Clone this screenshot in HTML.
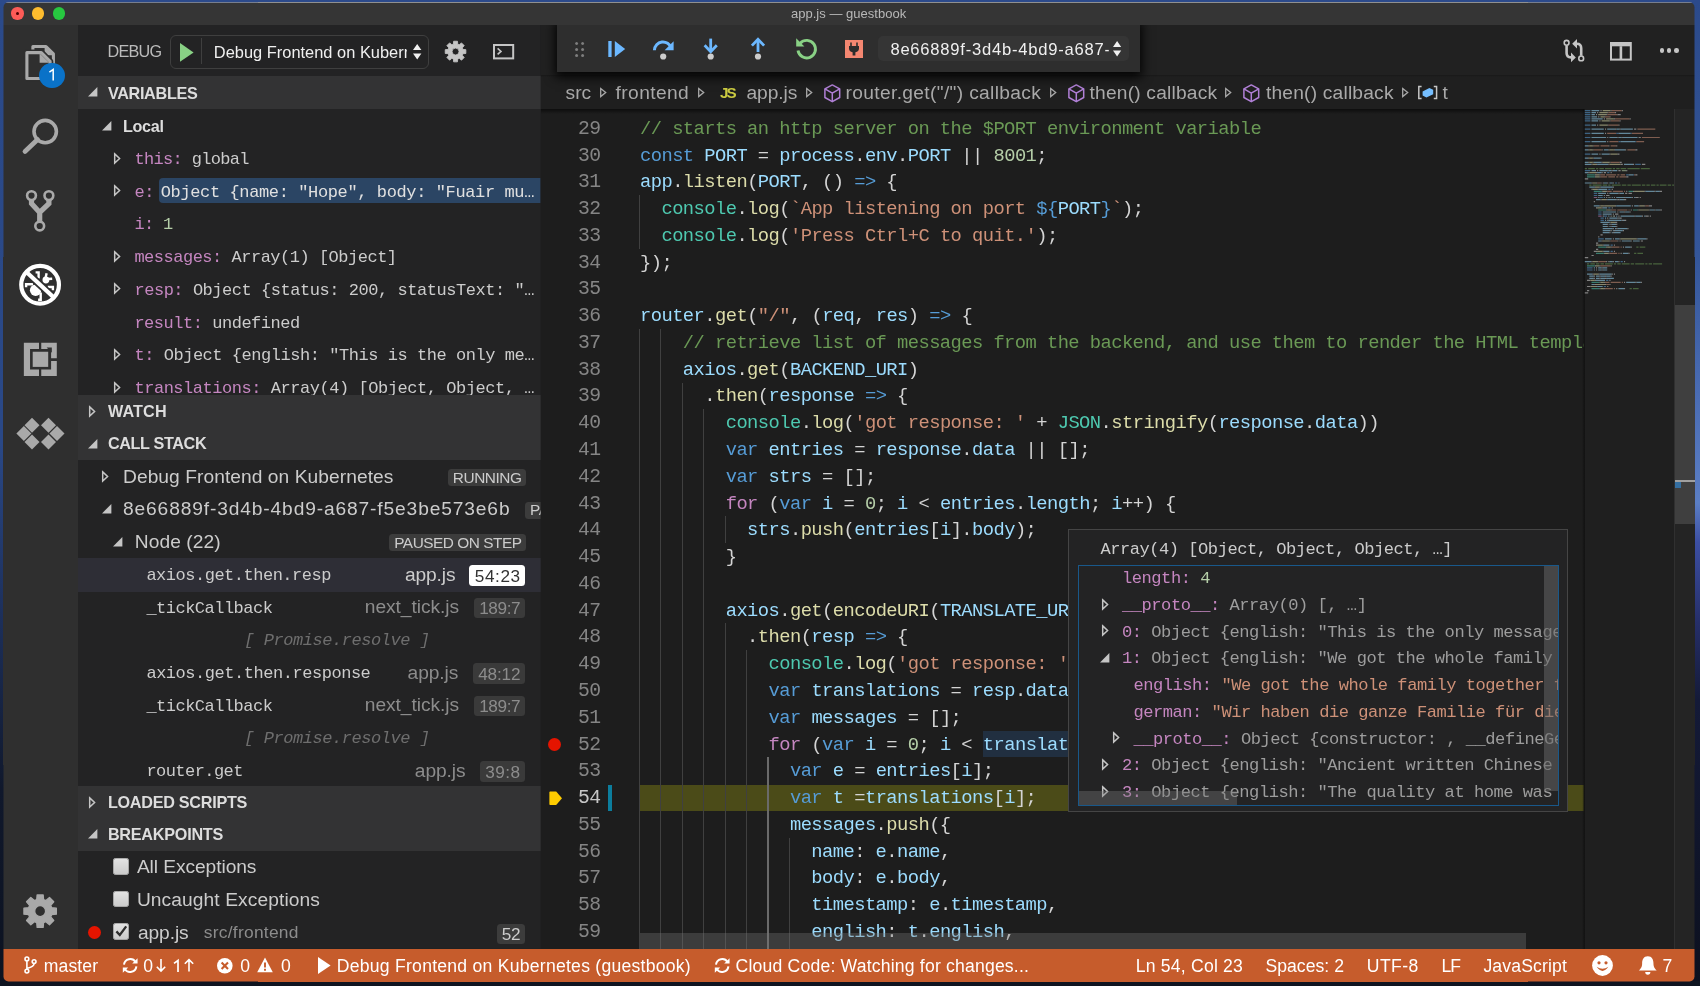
<!DOCTYPE html>
<html><head><meta charset="utf-8"><title>app.js - guestbook</title>
<style>
html,body{margin:0;padding:0;}
body{width:1700px;height:986px;overflow:hidden;position:relative;background:#0d1422;font-family:"Liberation Sans",sans-serif;}
svg{position:absolute;overflow:visible;}
</style></head><body>
<div style="position:absolute;left:0;top:0;width:1700px;height:986px;background:linear-gradient(180deg,#2b4a8a 0%,#2a4886 45%,#1d305c 62%,#10182c 80%,#0c1220 100%);"></div>
<div style="position:absolute;left:1690px;top:0;width:10px;height:986px;background:linear-gradient(180deg,#2b4a8b 0%,#34569a 26%,#4a6cb4 40%,#5b7ec4 51%,#3c4fa4 55%,#262f6a 63%,#141a38 71%,#0c101e 100%);"></div>
<div style="position:absolute;left:0.00px;top:0.00px;width:1700.00px;height:3.00px;background:#2c4a8b;"></div>
<div style="position:absolute;left:0.00px;top:981.00px;width:1700.00px;height:5.00px;background:#0e1420;"></div>
<div style="position:absolute;left:0;top:0;width:1700px;height:986px;clip-path:inset(2.30px 5.50px 4.60px 3.50px round 5px);will-change:transform;">
<div style="position:absolute;left:0.00px;top:0.00px;width:1700.00px;height:986.00px;background:#1e1e1e;"></div>
<div style="position:absolute;left:0.00px;top:0.00px;width:1700.00px;height:24.70px;background:#353535;"></div>
<div style="position:absolute;left:0.00px;top:2.30px;width:1700.00px;height:0.80px;background:#909090;"></div>
<div style="position:absolute;left:11.4px;top:7.2px;width:12.4px;height:12.4px;border-radius:50%;background:#fc5b57;"></div>
<div style="position:absolute;left:32.0px;top:7.2px;width:12.4px;height:12.4px;border-radius:50%;background:#fdbc2e;"></div>
<div style="position:absolute;left:52.6px;top:7.2px;width:12.4px;height:12.4px;border-radius:50%;background:#27c840;"></div>
<div style="position:absolute;left:16.1px;top:11.9px;width:3px;height:3px;border-radius:50%;background:#4a0002;"></div>
<span style="position:absolute;left:790.90px;top:5.40px;line-height:17px;font-family:'Liberation Sans', sans-serif;font-size:13px;color:#b8b8b8;white-space:pre;letter-spacing:0.028px;">app.js — guestbook</span>
<div style="position:absolute;left:0.00px;top:25.00px;width:77.60px;height:924.00px;background:#2f2f2f;"></div>
<svg style="left:22px;top:42px" width="40" height="42" viewBox="0 0 40 42">
<path d="M10.9 9.4 V4.5 H24 L31.4 11.9 V30.5 H28.6" fill="none" stroke="#a9a9a9" stroke-width="3.1" stroke-linejoin="round"/>
<path d="M22.6 4.6 V13.2 H31.2 Z" fill="#a9a9a9"/>
<path d="M4.9 10.6 H19.3 L28.1 19.4 V36.5 H4.9 Z" fill="#2f2f2f" stroke="#2f2f2f" stroke-width="6.4" stroke-linejoin="round"/>
<path d="M4.9 10.6 H19.3 L28.1 19.4 V36.5 H4.9 Z" fill="#2f2f2f" stroke="#a9a9a9" stroke-width="3.1" stroke-linejoin="round"/>
<path d="M17.6 11.2 V20.8 H27.2 Z" fill="#a9a9a9"/>
</svg>
<div style="position:absolute;left:39.3px;top:62.6px;width:25.8px;height:25.8px;border-radius:50%;background:#0a72c8;"></div>
<svg style="left:48px;top:68px" width="8" height="14" viewBox="0 0 8 14"><path d="M1.4 4.2 L5.2 1.4 V12.6" fill="none" stroke="#fff" stroke-width="1.5"/></svg>
<svg style="left:18px;top:112px" width="50" height="50" viewBox="0 0 50 50">
<circle cx="27.2" cy="19.6" r="11.2" fill="none" stroke="#a9a9a9" stroke-width="3.6"/>
<path d="M19.6 27.6 L7 39.4" stroke="#a9a9a9" stroke-width="4.8" stroke-linecap="round"/>
</svg>
<svg style="left:20px;top:184px" width="40" height="52" viewBox="0 0 40 52">
<path d="M11.5 15 V19.6 L19.7 28.4 V38 M28.9 15 V19.6 L19.7 28.4" fill="none" stroke="#a9a9a9" stroke-width="5.2" stroke-linejoin="miter"/>
<circle cx="11.5" cy="11.6" r="4.4" fill="#2f2f2f" stroke="#a9a9a9" stroke-width="2.6"/>
<circle cx="28.9" cy="11.6" r="4.4" fill="#2f2f2f" stroke="#a9a9a9" stroke-width="2.6"/>
<circle cx="19.7" cy="42" r="4.4" fill="#2f2f2f" stroke="#a9a9a9" stroke-width="2.6"/>
</svg>
<svg style="left:18px;top:263px" width="44" height="44" viewBox="0 0 44 44">
<g fill="#fff" stroke="none">
<circle cx="17.6" cy="27.3" r="5.7"/>
<circle cx="27.9" cy="17" r="3.4"/>
</g>
<g stroke="#fff" stroke-width="2.4" fill="none" stroke-linecap="butt" stroke-linejoin="miter">
<path d="M15.1 21.2 H8.1 V24.2"/><path d="M22.7 29.4 V36.7 H20.1"/><path d="M29.7 24 H34.9 V27.2"/>
<path d="M20.6 15.4 V9.4 H17.6"/><path d="M27.6 14.8 L28.6 10.2"/><path d="M29.6 16 L34.2 15.7"/>
</g>
<path d="M8.2 8.9 L36 34.7" stroke="#2f2f2f" stroke-width="7.6"/>
<circle cx="22.1" cy="21.8" r="18.85" fill="none" stroke="#fff" stroke-width="4.2"/>
<path d="M7.6 8.3 L36.6 35.3" stroke="#fff" stroke-width="4.2"/>
</svg>
<svg style="left:22px;top:340px" width="38" height="38" viewBox="0 0 38 38" fill="#a9a9a9">
<path d="M1.85 2.8 H17 V9.1 H8.05 V29.5 H17 V35.9 H1.85 Z"/>
<path d="M19.25 2.8 H34.8 V18.3 H29.1 V9.1 H19.25 Z"/>
<path d="M29.1 21 H34.8 V35.9 H19.25 V29.5 H29.1 Z"/>
<rect x="10.7" y="11.75" width="15.5" height="15.15"/>
<path d="M24.6 7.6 L29.8 7.6 L29.8 12.8 Z" fill="#2f2f2f"/>
</svg>
<svg style="left:0;top:0" width="80" height="500" viewBox="0 0 80 500"><path d="M32.0 417.7 L39.5 425.2 L32.0 432.7 L24.5 425.2 Z" fill="#a9a9a9"/><path d="M48.5 417.7 L56.0 425.2 L48.5 432.7 L41.0 425.2 Z" fill="#a9a9a9"/><path d="M23.9 426.0 L31.4 433.5 L23.9 441.0 L16.4 433.5 Z" fill="#a9a9a9"/><path d="M57.0 426.0 L64.5 433.5 L57.0 441.0 L49.5 433.5 Z" fill="#a9a9a9"/><path d="M32.0 434.5 L39.5 442.0 L32.0 449.5 L24.5 442.0 Z" fill="#a9a9a9"/><path d="M48.5 434.5 L56.0 442.0 L48.5 449.5 L41.0 442.0 Z" fill="#a9a9a9"/></svg>
<svg style="left:22.15px;top:893.35px" width="36.30" height="36.30" viewBox="-11 -11 22 22"><path d="M-2.07 -7.00 L-1.82 -9.83 L1.82 -9.83 L2.07 -7.00 L3.48 -6.42 L5.66 -8.24 L8.24 -5.66 L6.42 -3.48 L7.00 -2.07 L9.83 -1.82 L9.83 1.82 L7.00 2.07 L6.42 3.48 L8.24 5.66 L5.66 8.24 L3.48 6.42 L2.07 7.00 L1.82 9.83 L-1.82 9.83 L-2.07 7.00 L-3.48 6.42 L-5.66 8.24 L-8.24 5.66 L-6.42 3.48 L-7.00 2.07 L-9.83 1.82 L-9.83 -1.82 L-7.00 -2.07 L-6.42 -3.48 L-8.24 -5.66 L-5.66 -8.24 L-3.48 -6.42 Z M3.30 0 A3.30 3.30 0 1 0 -3.30 0 A3.30 3.30 0 1 0 3.30 0 Z" fill="#a9a9a9" fill-rule="evenodd" stroke="#a9a9a9" stroke-width="0.8" stroke-linejoin="round"/></svg>
<div style="position:absolute;left:0;top:0;width:1700px;height:986px;clip-path:inset(25.00px 1159.40px 37.30px 77.60px);">
<div style="position:absolute;left:77.60px;top:25.00px;width:463.00px;height:924.00px;background:#232324;"></div>
<span style="position:absolute;left:107.50px;top:41.49px;line-height:21px;font-family:'Liberation Sans', sans-serif;font-size:16.2px;color:#bbbbbb;white-space:pre;letter-spacing:-0.773px;">DEBUG</span>
<div style="position:absolute;left:169.6px;top:35.3px;width:257.8px;height:31.6px;border:1px solid #3f3f3f;border-radius:6px;box-sizing:content-box;"></div>
<svg style="left:180.2px;top:42.9px" width="13.6" height="18.8" viewBox="0 0 13.6 18.8"><path d="M0 0 L13.6 9.4 L0 18.8 Z" fill="#89d185"/></svg>
<div style="position:absolute;left:201.30px;top:38.30px;width:1.00px;height:26.20px;background:#3f3f3f;"></div>
<div style="position:absolute;left:0;top:0;width:1700px;height:986px;clip-path:inset(30.00px 1293.10px 914.00px 210.00px);">
<span style="position:absolute;left:213.80px;top:42.02px;line-height:21px;font-family:'Liberation Sans', sans-serif;font-size:16.4px;color:#f0f0f0;white-space:pre;letter-spacing:0.017px;">Debug Frontend on Kubernetes</span>
</div>
<svg style="left:413.4px;top:44.4px" width="8.4" height="15.6" viewBox="0 0 8.4 15.6"><path d="M4.2 0 L8.4 6 H0 Z M4.2 15.6 L8.4 9.6 H0 Z" fill="#f0f0f0"/></svg>
<svg style="left:444.25px;top:39.65px" width="23.10" height="23.10" viewBox="-11 -11 22 22"><path d="M-2.07 -7.00 L-1.82 -9.83 L1.82 -9.83 L2.07 -7.00 L3.48 -6.42 L5.66 -8.24 L8.24 -5.66 L6.42 -3.48 L7.00 -2.07 L9.83 -1.82 L9.83 1.82 L7.00 2.07 L6.42 3.48 L8.24 5.66 L5.66 8.24 L3.48 6.42 L2.07 7.00 L1.82 9.83 L-1.82 9.83 L-2.07 7.00 L-3.48 6.42 L-5.66 8.24 L-8.24 5.66 L-6.42 3.48 L-7.00 2.07 L-9.83 1.82 L-9.83 -1.82 L-7.00 -2.07 L-6.42 -3.48 L-8.24 -5.66 L-5.66 -8.24 L-3.48 -6.42 Z M3.30 0 A3.30 3.30 0 1 0 -3.30 0 A3.30 3.30 0 1 0 3.30 0 Z" fill="#c5c5c5" fill-rule="evenodd" stroke="#c5c5c5" stroke-width="0.8" stroke-linejoin="round"/></svg>
<svg style="left:492.6px;top:43.8px" width="21.2" height="15.4" viewBox="0 0 21.2 15.4">
<rect x="1" y="1" width="19.2" height="13.4" fill="none" stroke="#c5c5c5" stroke-width="2"/>
<path d="M4.6 4.4 L8 7.4 L4.6 10.4" fill="none" stroke="#c5c5c5" stroke-width="1.6"/></svg>
<div style="position:absolute;left:0;top:0;width:1700px;height:986px;clip-path:inset(109.00px 1159.40px 590.80px 77.60px);">
<svg style="left:101.60px;top:120.90px" width="9.4" height="9.4" viewBox="0 0 10 10"><path d="M10 0 V10 H0 Z" fill="#c5c5c5"/></svg>
<span style="position:absolute;left:123.00px;top:115.79px;line-height:21px;font-family:'Liberation Sans', sans-serif;font-size:16.2px;color:#dddddd;white-space:pre;font-weight:700;letter-spacing:-0.351px;">Local</span>
<svg style="left:114.00px;top:152.60px" width="6.2" height="11" viewBox="0 0 6.2 11"><path d="M0.7 0.9 L5.6000000000000005 5.5 L0.7 10.1 Z" fill="none" stroke="#c5c5c5" stroke-width="1.5" stroke-linejoin="miter"/></svg>
<span style="position:absolute;left:134.40px;top:149.07px;line-height:22px;font-family:'Liberation Mono', monospace;font-size:17.0px;color:#cccccc;white-space:pre;letter-spacing:-0.664px;"><span style="color:#c586c0">this:</span> <span style="color:#cccccc">global</span></span>
<div style="position:absolute;left:159px;top:177.70px;width:381.60px;height:25.5px;background:#2b4564;border-radius:4px 0 0 4px;"></div>
<svg style="left:114.00px;top:185.30px" width="6.2" height="11" viewBox="0 0 6.2 11"><path d="M0.7 0.9 L5.6000000000000005 5.5 L0.7 10.1 Z" fill="none" stroke="#c5c5c5" stroke-width="1.5" stroke-linejoin="miter"/></svg>
<span style="position:absolute;left:134.40px;top:181.77px;line-height:22px;font-family:'Liberation Mono', monospace;font-size:17.0px;color:#c586c0;white-space:pre;letter-spacing:-0.45px;">e:</span>
<span style="position:absolute;left:160.80px;top:181.77px;line-height:22px;font-family:'Liberation Mono', monospace;font-size:17.0px;color:#e0e0e0;white-space:pre;letter-spacing:-0.381px;">Object {name: "Hope", body: "Fuair mu…</span>
<span style="position:absolute;left:134.40px;top:214.47px;line-height:22px;font-family:'Liberation Mono', monospace;font-size:17.0px;color:#cccccc;white-space:pre;letter-spacing:-0.632px;"><span style="color:#c586c0">i:</span> <span style="color:#b5cea8">1</span></span>
<svg style="left:114.00px;top:250.70px" width="6.2" height="11" viewBox="0 0 6.2 11"><path d="M0.7 0.9 L5.6000000000000005 5.5 L0.7 10.1 Z" fill="none" stroke="#c5c5c5" stroke-width="1.5" stroke-linejoin="miter"/></svg>
<span style="position:absolute;left:134.40px;top:247.17px;line-height:22px;font-family:'Liberation Mono', monospace;font-size:17.0px;color:#cccccc;white-space:pre;letter-spacing:-0.493px;"><span style="color:#c586c0">messages:</span> <span style="color:#cccccc">Array(1) [Object]</span></span>
<svg style="left:114.00px;top:283.40px" width="6.2" height="11" viewBox="0 0 6.2 11"><path d="M0.7 0.9 L5.6000000000000005 5.5 L0.7 10.1 Z" fill="none" stroke="#c5c5c5" stroke-width="1.5" stroke-linejoin="miter"/></svg>
<span style="position:absolute;left:134.40px;top:279.87px;line-height:22px;font-family:'Liberation Mono', monospace;font-size:17.0px;color:#cccccc;white-space:pre;letter-spacing:-0.456px;"><span style="color:#c586c0">resp:</span> <span style="color:#cccccc">Object {status: 200, statusText: "…</span></span>
<span style="position:absolute;left:134.40px;top:312.57px;line-height:22px;font-family:'Liberation Mono', monospace;font-size:17.0px;color:#cccccc;white-space:pre;letter-spacing:-0.476px;"><span style="color:#c586c0">result:</span> <span style="color:#cccccc">undefined</span></span>
<svg style="left:114.00px;top:348.80px" width="6.2" height="11" viewBox="0 0 6.2 11"><path d="M0.7 0.9 L5.6000000000000005 5.5 L0.7 10.1 Z" fill="none" stroke="#c5c5c5" stroke-width="1.5" stroke-linejoin="miter"/></svg>
<span style="position:absolute;left:134.40px;top:345.27px;line-height:22px;font-family:'Liberation Mono', monospace;font-size:17.0px;color:#cccccc;white-space:pre;letter-spacing:-0.456px;"><span style="color:#c586c0">t:</span> <span style="color:#cccccc">Object {english: "This is the only me…</span></span>
<svg style="left:114.00px;top:381.50px" width="6.2" height="11" viewBox="0 0 6.2 11"><path d="M0.7 0.9 L5.6000000000000005 5.5 L0.7 10.1 Z" fill="none" stroke="#c5c5c5" stroke-width="1.5" stroke-linejoin="miter"/></svg>
<span style="position:absolute;left:134.40px;top:377.97px;line-height:22px;font-family:'Liberation Mono', monospace;font-size:17.0px;color:#cccccc;white-space:pre;letter-spacing:-0.456px;"><span style="color:#c586c0">translations:</span> <span style="color:#cccccc">Array(4) [Object, Object, …</span></span>
</div>
<div style="position:absolute;left:77.60px;top:76.30px;width:463.00px;height:32.70px;background:#333334;"></div>
<svg style="left:88.00px;top:87.30px" width="9.4" height="9.4" viewBox="0 0 10 10"><path d="M10 0 V10 H0 Z" fill="#c5c5c5"/></svg>
<span style="position:absolute;left:107.90px;top:82.59px;line-height:21px;font-family:'Liberation Sans', sans-serif;font-size:16.2px;color:#dddddd;white-space:pre;font-weight:700;letter-spacing:-0.311px;">VARIABLES</span>
<div style="position:absolute;left:77.60px;top:395.20px;width:463.00px;height:32.70px;background:#333334;"></div>
<svg style="left:89.20px;top:406.30px" width="6.2" height="11" viewBox="0 0 6.2 11"><path d="M0.7 0.9 L5.6000000000000005 5.5 L0.7 10.1 Z" fill="none" stroke="#c5c5c5" stroke-width="1.5" stroke-linejoin="miter"/></svg>
<span style="position:absolute;left:107.90px;top:401.29px;line-height:21px;font-family:'Liberation Sans', sans-serif;font-size:16.2px;color:#dddddd;white-space:pre;font-weight:700;letter-spacing:0.147px;">WATCH</span>
<div style="position:absolute;left:77.60px;top:427.60px;width:463.00px;height:32.70px;background:#333334;"></div>
<svg style="left:88.00px;top:438.60px" width="9.4" height="9.4" viewBox="0 0 10 10"><path d="M10 0 V10 H0 Z" fill="#c5c5c5"/></svg>
<span style="position:absolute;left:107.90px;top:433.29px;line-height:21px;font-family:'Liberation Sans', sans-serif;font-size:16.2px;color:#dddddd;white-space:pre;font-weight:700;letter-spacing:-0.350px;">CALL STACK</span>
<svg style="left:102.20px;top:470.80px" width="6.2" height="11" viewBox="0 0 6.2 11"><path d="M0.7 0.9 L5.6000000000000005 5.5 L0.7 10.1 Z" fill="none" stroke="#c5c5c5" stroke-width="1.5" stroke-linejoin="miter"/></svg>
<span style="position:absolute;left:123.00px;top:463.55px;line-height:25px;font-family:'Liberation Sans', sans-serif;font-size:19.2px;color:#cccccc;white-space:pre;letter-spacing:0.058px;">Debug Frontend on Kubernetes</span>
<div style="position:absolute;left:448.00px;top:468.90px;width:78.40px;height:17.2px;background:#3c3c3c;border-radius:3.5px;"></div>
<span style="position:absolute;left:452.80px;top:467.76px;line-height:20px;font-family:'Liberation Sans', sans-serif;font-size:15.4px;color:#cccccc;white-space:pre;letter-spacing:-0.435px;">RUNNING</span>
<svg style="left:101.60px;top:504.30px" width="9.4" height="9.4" viewBox="0 0 10 10"><path d="M10 0 V10 H0 Z" fill="#c5c5c5"/></svg>
<span style="position:absolute;left:123.00px;top:496.25px;line-height:25px;font-family:'Liberation Sans', sans-serif;font-size:19.2px;color:#cccccc;white-space:pre;letter-spacing:0.863px;">8e66889f-3d4b-4bd9-a687-f5e3be573e6b</span>
<div style="position:absolute;left:525.30px;top:501.60px;width:74.70px;height:17.2px;background:#3c3c3c;border-radius:3.5px;"></div>
<span style="position:absolute;left:530.00px;top:500.46px;line-height:20px;font-family:'Liberation Sans', sans-serif;font-size:15.4px;color:#cccccc;white-space:pre;letter-spacing:-0.392px;">PAUSED</span>
<svg style="left:113.40px;top:537.00px" width="9.4" height="9.4" viewBox="0 0 10 10"><path d="M10 0 V10 H0 Z" fill="#c5c5c5"/></svg>
<span style="position:absolute;left:134.80px;top:528.95px;line-height:25px;font-family:'Liberation Sans', sans-serif;font-size:19.2px;color:#cccccc;white-space:pre;letter-spacing:0.056px;">Node (22)</span>
<div style="position:absolute;left:389.00px;top:534.30px;width:137.40px;height:17.2px;background:#3c3c3c;border-radius:3.5px;"></div>
<span style="position:absolute;left:394.20px;top:533.16px;line-height:20px;font-family:'Liberation Sans', sans-serif;font-size:15.4px;color:#cccccc;white-space:pre;letter-spacing:-0.473px;">PAUSED ON STEP</span>
<div style="position:absolute;left:77.60px;top:558.40px;width:463.00px;height:33.50px;background:#2e2e36;"></div>
<span style="position:absolute;left:146.40px;top:564.87px;line-height:22px;font-family:'Liberation Mono', monospace;font-size:17.0px;color:#cccccc;white-space:pre;letter-spacing:-0.489px;">axios.get.then.resp</span>
<span style="position:absolute;left:405.00px;top:561.65px;line-height:25px;font-family:'Liberation Sans', sans-serif;font-size:19.2px;color:#cccccc;white-space:pre;letter-spacing:-0.146px;">app.js</span>
<div style="position:absolute;left:469.20px;top:565.20px;width:56.10px;height:20.4px;background:#ffffff;border-radius:3.5px;"></div>
<span style="position:absolute;left:474.80px;top:564.64px;line-height:22px;font-family:'Liberation Sans', sans-serif;font-size:17.2px;color:#333333;white-space:pre;letter-spacing:0.574px;">54:23</span>
<span style="position:absolute;left:146.40px;top:597.57px;line-height:22px;font-family:'Liberation Mono', monospace;font-size:17.0px;color:#cccccc;white-space:pre;letter-spacing:-0.514px;">_tickCallback</span>
<span style="position:absolute;left:364.80px;top:594.35px;line-height:25px;font-family:'Liberation Sans', sans-serif;font-size:19.2px;color:#8c8c8c;white-space:pre;letter-spacing:-0.063px;">next_tick.js</span>
<div style="position:absolute;left:474.00px;top:597.90px;width:51.30px;height:20.4px;background:#3a3a3a;border-radius:3.5px;"></div>
<span style="position:absolute;left:479.20px;top:597.34px;line-height:22px;font-family:'Liberation Sans', sans-serif;font-size:17.2px;color:#8c8c8c;white-space:pre;letter-spacing:-0.403px;">189:7</span>
<span style="position:absolute;left:244.20px;top:630.27px;line-height:22px;font-family:'Liberation Mono', monospace;font-size:17.0px;color:#6e6e6e;white-space:pre;font-style:italic;letter-spacing:-0.446px;">[ Promise.resolve ]</span>
<span style="position:absolute;left:146.40px;top:662.97px;line-height:22px;font-family:'Liberation Mono', monospace;font-size:17.0px;color:#cccccc;white-space:pre;letter-spacing:-0.464px;">axios.get.then.response</span>
<span style="position:absolute;left:407.60px;top:659.75px;line-height:25px;font-family:'Liberation Sans', sans-serif;font-size:19.2px;color:#8c8c8c;white-space:pre;letter-spacing:-0.110px;">app.js</span>
<div style="position:absolute;left:472.80px;top:663.30px;width:52.50px;height:20.4px;background:#3a3a3a;border-radius:3.5px;"></div>
<span style="position:absolute;left:478.20px;top:662.74px;line-height:22px;font-family:'Liberation Sans', sans-serif;font-size:17.2px;color:#8c8c8c;white-space:pre;letter-spacing:-0.181px;">48:12</span>
<span style="position:absolute;left:146.40px;top:695.67px;line-height:22px;font-family:'Liberation Mono', monospace;font-size:17.0px;color:#cccccc;white-space:pre;letter-spacing:-0.514px;">_tickCallback</span>
<span style="position:absolute;left:364.80px;top:692.45px;line-height:25px;font-family:'Liberation Sans', sans-serif;font-size:19.2px;color:#8c8c8c;white-space:pre;letter-spacing:-0.063px;">next_tick.js</span>
<div style="position:absolute;left:474.00px;top:696.00px;width:51.30px;height:20.4px;background:#3a3a3a;border-radius:3.5px;"></div>
<span style="position:absolute;left:479.20px;top:695.44px;line-height:22px;font-family:'Liberation Sans', sans-serif;font-size:17.2px;color:#8c8c8c;white-space:pre;letter-spacing:-0.403px;">189:7</span>
<span style="position:absolute;left:244.20px;top:728.37px;line-height:22px;font-family:'Liberation Mono', monospace;font-size:17.0px;color:#6e6e6e;white-space:pre;font-style:italic;letter-spacing:-0.446px;">[ Promise.resolve ]</span>
<span style="position:absolute;left:146.40px;top:761.07px;line-height:22px;font-family:'Liberation Mono', monospace;font-size:17.0px;color:#cccccc;white-space:pre;letter-spacing:-0.551px;">router.get</span>
<span style="position:absolute;left:414.80px;top:757.85px;line-height:25px;font-family:'Liberation Sans', sans-serif;font-size:19.2px;color:#8c8c8c;white-space:pre;letter-spacing:-0.073px;">app.js</span>
<div style="position:absolute;left:479.80px;top:761.40px;width:45.50px;height:20.4px;background:#3a3a3a;border-radius:3.5px;"></div>
<span style="position:absolute;left:485.20px;top:760.84px;line-height:22px;font-family:'Liberation Sans', sans-serif;font-size:17.2px;color:#8c8c8c;white-space:pre;letter-spacing:0.499px;">39:8</span>
<div style="position:absolute;left:77.60px;top:785.60px;width:463.00px;height:32.70px;background:#333334;"></div>
<svg style="left:89.20px;top:796.70px" width="6.2" height="11" viewBox="0 0 6.2 11"><path d="M0.7 0.9 L5.6000000000000005 5.5 L0.7 10.1 Z" fill="none" stroke="#c5c5c5" stroke-width="1.5" stroke-linejoin="miter"/></svg>
<span style="position:absolute;left:107.90px;top:791.69px;line-height:21px;font-family:'Liberation Sans', sans-serif;font-size:16.2px;color:#dddddd;white-space:pre;font-weight:700;letter-spacing:-0.275px;">LOADED SCRIPTS</span>
<div style="position:absolute;left:77.60px;top:818.00px;width:463.00px;height:32.70px;background:#333334;"></div>
<svg style="left:88.00px;top:829.00px" width="9.4" height="9.4" viewBox="0 0 10 10"><path d="M10 0 V10 H0 Z" fill="#c5c5c5"/></svg>
<span style="position:absolute;left:107.90px;top:824.29px;line-height:21px;font-family:'Liberation Sans', sans-serif;font-size:16.2px;color:#dddddd;white-space:pre;font-weight:700;letter-spacing:-0.241px;">BREAKPOINTS</span>
<div style="position:absolute;left:112.60px;top:858.20px;width:16.4px;height:16.4px;border-radius:3.4px;background:linear-gradient(#e4e4e4,#c9c9c9);box-shadow:inset 0 0 0 0.8px #9a9a9a;"></div>
<span style="position:absolute;left:136.90px;top:854.35px;line-height:25px;font-family:'Liberation Sans', sans-serif;font-size:19.2px;color:#cccccc;white-space:pre;letter-spacing:-0.075px;">All Exceptions</span>
<div style="position:absolute;left:112.60px;top:890.80px;width:16.4px;height:16.4px;border-radius:3.4px;background:linear-gradient(#e4e4e4,#c9c9c9);box-shadow:inset 0 0 0 0.8px #9a9a9a;"></div>
<span style="position:absolute;left:136.90px;top:887.15px;line-height:25px;font-family:'Liberation Sans', sans-serif;font-size:19.2px;color:#cccccc;white-space:pre;letter-spacing:0.096px;">Uncaught Exceptions</span>
<div style="position:absolute;left:88px;top:926.2px;width:13.2px;height:13.2px;border-radius:50%;background:#e51400;"></div>
<div style="position:absolute;left:112.90px;top:923.40px;width:16.4px;height:16.4px;border-radius:3.4px;background:linear-gradient(#e4e4e4,#c9c9c9);box-shadow:inset 0 0 0 0.8px #9a9a9a;"></div>
<svg style="left:112.90px;top:923.40px" width="16.4" height="16.4" viewBox="0 0 16.4 16.4"><path d="M3.4 8.4 L6.8 12 L13.2 3.4" fill="none" stroke="#2e2e2e" stroke-width="2.3"/></svg>
<span style="position:absolute;left:138.00px;top:919.85px;line-height:25px;font-family:'Liberation Sans', sans-serif;font-size:19.2px;color:#cccccc;white-space:pre;letter-spacing:-0.110px;">app.js</span>
<span style="position:absolute;left:203.80px;top:921.47px;line-height:23px;font-family:'Liberation Sans', sans-serif;font-size:17.4px;color:#8c8c8c;white-space:pre;letter-spacing:0.258px;">src/frontend</span>
<div style="position:absolute;left:496.90px;top:924.00px;width:28.40px;height:20.4px;background:#3c3c3c;border-radius:3.5px;"></div>
<span style="position:absolute;left:501.80px;top:923.44px;line-height:22px;font-family:'Liberation Sans', sans-serif;font-size:17.2px;color:#cccccc;white-space:pre;letter-spacing:-0.350px;">52</span>
</div>
<div style="position:absolute;left:540.60px;top:25.00px;width:1157.40px;height:924.00px;background:#1d1d1d;"></div>
<div style="position:absolute;left:540.60px;top:25.00px;width:1157.40px;height:49.80px;background:#212121;"></div>
<div style="position:absolute;left:540.60px;top:74.80px;width:1157.40px;height:34.20px;background:#1f1f1f;"></div>
<div style="position:absolute;left:540.6px;top:74.8px;width:1157.4px;height:2.5px;background:linear-gradient(rgba(0,0,0,.22),rgba(0,0,0,0));"></div>
<div style="position:absolute;left:540.6px;top:109px;width:1157.4px;height:5px;background:linear-gradient(rgba(0,0,0,.55),rgba(0,0,0,0));"></div>
<div style="position:absolute;left:0;top:0;width:1700px;height:986px;clip-path:inset(109.00px 116.40px 37.00px 540.60px);">
<div style="position:absolute;left:639.00px;top:784.55px;width:944.60px;height:26.67px;background:#4b4b18;"></div>
<div style="position:absolute;left:982.54px;top:731.11px;width:129.14px;height:26.17px;background:#212f40;"></div>
<div style="position:absolute;left:638.80px;top:195.11px;width:1.15px;height:53.54px;background:#404040;"></div>
<div style="position:absolute;left:638.80px;top:328.96px;width:1.15px;height:642.48px;background:#404040;"></div>
<div style="position:absolute;left:660.24px;top:328.96px;width:1.15px;height:642.48px;background:#404040;"></div>
<div style="position:absolute;left:681.68px;top:382.50px;width:1.15px;height:588.94px;background:#404040;"></div>
<div style="position:absolute;left:703.12px;top:409.27px;width:1.15px;height:562.17px;background:#404040;"></div>
<div style="position:absolute;left:724.56px;top:516.35px;width:1.15px;height:26.77px;background:#404040;"></div>
<div style="position:absolute;left:724.56px;top:623.43px;width:1.15px;height:348.01px;background:#404040;"></div>
<div style="position:absolute;left:746.00px;top:650.20px;width:1.15px;height:321.24px;background:#404040;"></div>
<div style="position:absolute;left:767.44px;top:757.28px;width:1.15px;height:214.16px;background:#6a6a6a;"></div>
<div style="position:absolute;left:788.88px;top:837.59px;width:1.15px;height:133.85px;background:#404040;"></div>
<span style="position:absolute;left:578.76px;top:90.02px;line-height:24px;font-family:'Liberation Mono', monospace;font-size:18.8px;color:#858585;white-space:pre;letter-spacing:-0.562px;transform:scale(1.05);transform-origin:100% 71%;">28</span>
<span style="position:absolute;left:578.76px;top:116.79px;line-height:24px;font-family:'Liberation Mono', monospace;font-size:18.8px;color:#858585;white-space:pre;letter-spacing:-0.562px;transform:scale(1.05);transform-origin:100% 71%;">29</span>
<span style="position:absolute;left:640.00px;top:116.79px;line-height:24px;font-family:'Liberation Mono', monospace;font-size:18.8px;color:#d4d4d4;white-space:pre;letter-spacing:-0.562px;"><span style="color:#6a9955">// starts an http server on the $PORT environment variable</span></span>
<span style="position:absolute;left:578.76px;top:143.56px;line-height:24px;font-family:'Liberation Mono', monospace;font-size:18.8px;color:#858585;white-space:pre;letter-spacing:-0.562px;transform:scale(1.05);transform-origin:100% 71%;">30</span>
<span style="position:absolute;left:640.00px;top:143.56px;line-height:24px;font-family:'Liberation Mono', monospace;font-size:18.8px;color:#d4d4d4;white-space:pre;letter-spacing:-0.562px;"><span style="color:#569cd6">const</span> <span style="color:#9cdcfe">PORT</span> = <span style="color:#9cdcfe">process</span>.<span style="color:#9cdcfe">env</span>.<span style="color:#9cdcfe">PORT</span> || <span style="color:#b5cea8">8001</span>;</span>
<span style="position:absolute;left:578.76px;top:170.33px;line-height:24px;font-family:'Liberation Mono', monospace;font-size:18.8px;color:#858585;white-space:pre;letter-spacing:-0.562px;transform:scale(1.05);transform-origin:100% 71%;">31</span>
<span style="position:absolute;left:640.00px;top:170.33px;line-height:24px;font-family:'Liberation Mono', monospace;font-size:18.8px;color:#d4d4d4;white-space:pre;letter-spacing:-0.562px;"><span style="color:#9cdcfe">app</span>.<span style="color:#dcdcaa">listen</span>(<span style="color:#9cdcfe">PORT</span>, () <span style="color:#569cd6">=&gt;</span> {</span>
<span style="position:absolute;left:578.76px;top:197.10px;line-height:24px;font-family:'Liberation Mono', monospace;font-size:18.8px;color:#858585;white-space:pre;letter-spacing:-0.562px;transform:scale(1.05);transform-origin:100% 71%;">32</span>
<span style="position:absolute;left:640.00px;top:197.10px;line-height:24px;font-family:'Liberation Mono', monospace;font-size:18.8px;color:#d4d4d4;white-space:pre;letter-spacing:-0.562px;">  <span style="color:#4ec9b0">console</span>.<span style="color:#dcdcaa">log</span>(<span style="color:#ce9178">`App listening on port </span><span style="color:#569cd6">${</span><span style="color:#9cdcfe">PORT</span><span style="color:#569cd6">}</span><span style="color:#ce9178">`</span>);</span>
<span style="position:absolute;left:578.76px;top:223.87px;line-height:24px;font-family:'Liberation Mono', monospace;font-size:18.8px;color:#858585;white-space:pre;letter-spacing:-0.562px;transform:scale(1.05);transform-origin:100% 71%;">33</span>
<span style="position:absolute;left:640.00px;top:223.87px;line-height:24px;font-family:'Liberation Mono', monospace;font-size:18.8px;color:#d4d4d4;white-space:pre;letter-spacing:-0.562px;">  <span style="color:#4ec9b0">console</span>.<span style="color:#dcdcaa">log</span>(<span style="color:#ce9178">'Press Ctrl+C to quit.'</span>);</span>
<span style="position:absolute;left:578.76px;top:250.64px;line-height:24px;font-family:'Liberation Mono', monospace;font-size:18.8px;color:#858585;white-space:pre;letter-spacing:-0.562px;transform:scale(1.05);transform-origin:100% 71%;">34</span>
<span style="position:absolute;left:640.00px;top:250.64px;line-height:24px;font-family:'Liberation Mono', monospace;font-size:18.8px;color:#d4d4d4;white-space:pre;letter-spacing:-0.562px;">});</span>
<span style="position:absolute;left:578.76px;top:277.41px;line-height:24px;font-family:'Liberation Mono', monospace;font-size:18.8px;color:#858585;white-space:pre;letter-spacing:-0.562px;transform:scale(1.05);transform-origin:100% 71%;">35</span>
<span style="position:absolute;left:578.76px;top:304.18px;line-height:24px;font-family:'Liberation Mono', monospace;font-size:18.8px;color:#858585;white-space:pre;letter-spacing:-0.562px;transform:scale(1.05);transform-origin:100% 71%;">36</span>
<span style="position:absolute;left:640.00px;top:304.18px;line-height:24px;font-family:'Liberation Mono', monospace;font-size:18.8px;color:#d4d4d4;white-space:pre;letter-spacing:-0.562px;"><span style="color:#9cdcfe">router</span>.<span style="color:#dcdcaa">get</span>(<span style="color:#ce9178">"/"</span>, (<span style="color:#9cdcfe">req</span>, <span style="color:#9cdcfe">res</span>) <span style="color:#569cd6">=&gt;</span> {</span>
<span style="position:absolute;left:578.76px;top:330.95px;line-height:24px;font-family:'Liberation Mono', monospace;font-size:18.8px;color:#858585;white-space:pre;letter-spacing:-0.562px;transform:scale(1.05);transform-origin:100% 71%;">37</span>
<span style="position:absolute;left:640.00px;top:330.95px;line-height:24px;font-family:'Liberation Mono', monospace;font-size:18.8px;color:#d4d4d4;white-space:pre;letter-spacing:-0.562px;">    <span style="color:#6a9955">// retrieve list of messages from the backend, and use them to render the HTML template</span></span>
<span style="position:absolute;left:578.76px;top:357.72px;line-height:24px;font-family:'Liberation Mono', monospace;font-size:18.8px;color:#858585;white-space:pre;letter-spacing:-0.562px;transform:scale(1.05);transform-origin:100% 71%;">38</span>
<span style="position:absolute;left:640.00px;top:357.72px;line-height:24px;font-family:'Liberation Mono', monospace;font-size:18.8px;color:#d4d4d4;white-space:pre;letter-spacing:-0.562px;">    <span style="color:#9cdcfe">axios</span>.<span style="color:#dcdcaa">get</span>(<span style="color:#9cdcfe">BACKEND_URI</span>)</span>
<span style="position:absolute;left:578.76px;top:384.49px;line-height:24px;font-family:'Liberation Mono', monospace;font-size:18.8px;color:#858585;white-space:pre;letter-spacing:-0.562px;transform:scale(1.05);transform-origin:100% 71%;">39</span>
<span style="position:absolute;left:640.00px;top:384.49px;line-height:24px;font-family:'Liberation Mono', monospace;font-size:18.8px;color:#d4d4d4;white-space:pre;letter-spacing:-0.562px;">      .<span style="color:#dcdcaa">then</span>(<span style="color:#9cdcfe">response</span> <span style="color:#569cd6">=&gt;</span> {</span>
<span style="position:absolute;left:578.76px;top:411.26px;line-height:24px;font-family:'Liberation Mono', monospace;font-size:18.8px;color:#858585;white-space:pre;letter-spacing:-0.562px;transform:scale(1.05);transform-origin:100% 71%;">40</span>
<span style="position:absolute;left:640.00px;top:411.26px;line-height:24px;font-family:'Liberation Mono', monospace;font-size:18.8px;color:#d4d4d4;white-space:pre;letter-spacing:-0.562px;">        <span style="color:#4ec9b0">console</span>.<span style="color:#dcdcaa">log</span>(<span style="color:#ce9178">'got response: '</span> + <span style="color:#4ec9b0">JSON</span>.<span style="color:#dcdcaa">stringify</span>(<span style="color:#9cdcfe">response</span>.<span style="color:#9cdcfe">data</span>))</span>
<span style="position:absolute;left:578.76px;top:438.03px;line-height:24px;font-family:'Liberation Mono', monospace;font-size:18.8px;color:#858585;white-space:pre;letter-spacing:-0.562px;transform:scale(1.05);transform-origin:100% 71%;">41</span>
<span style="position:absolute;left:640.00px;top:438.03px;line-height:24px;font-family:'Liberation Mono', monospace;font-size:18.8px;color:#d4d4d4;white-space:pre;letter-spacing:-0.562px;">        <span style="color:#569cd6">var</span> <span style="color:#9cdcfe">entries</span> = <span style="color:#9cdcfe">response</span>.<span style="color:#9cdcfe">data</span> || [];</span>
<span style="position:absolute;left:578.76px;top:464.80px;line-height:24px;font-family:'Liberation Mono', monospace;font-size:18.8px;color:#858585;white-space:pre;letter-spacing:-0.562px;transform:scale(1.05);transform-origin:100% 71%;">42</span>
<span style="position:absolute;left:640.00px;top:464.80px;line-height:24px;font-family:'Liberation Mono', monospace;font-size:18.8px;color:#d4d4d4;white-space:pre;letter-spacing:-0.562px;">        <span style="color:#569cd6">var</span> <span style="color:#9cdcfe">strs</span> = [];</span>
<span style="position:absolute;left:578.76px;top:491.57px;line-height:24px;font-family:'Liberation Mono', monospace;font-size:18.8px;color:#858585;white-space:pre;letter-spacing:-0.562px;transform:scale(1.05);transform-origin:100% 71%;">43</span>
<span style="position:absolute;left:640.00px;top:491.57px;line-height:24px;font-family:'Liberation Mono', monospace;font-size:18.8px;color:#d4d4d4;white-space:pre;letter-spacing:-0.562px;">        <span style="color:#c586c0">for</span> (<span style="color:#569cd6">var</span> <span style="color:#9cdcfe">i</span> = <span style="color:#b5cea8">0</span>; <span style="color:#9cdcfe">i</span> &lt; <span style="color:#9cdcfe">entries</span>.<span style="color:#9cdcfe">length</span>; <span style="color:#9cdcfe">i</span>++) {</span>
<span style="position:absolute;left:578.76px;top:518.34px;line-height:24px;font-family:'Liberation Mono', monospace;font-size:18.8px;color:#858585;white-space:pre;letter-spacing:-0.562px;transform:scale(1.05);transform-origin:100% 71%;">44</span>
<span style="position:absolute;left:640.00px;top:518.34px;line-height:24px;font-family:'Liberation Mono', monospace;font-size:18.8px;color:#d4d4d4;white-space:pre;letter-spacing:-0.562px;">          <span style="color:#9cdcfe">strs</span>.<span style="color:#dcdcaa">push</span>(<span style="color:#9cdcfe">entries</span>[<span style="color:#9cdcfe">i</span>].<span style="color:#9cdcfe">body</span>);</span>
<span style="position:absolute;left:578.76px;top:545.11px;line-height:24px;font-family:'Liberation Mono', monospace;font-size:18.8px;color:#858585;white-space:pre;letter-spacing:-0.562px;transform:scale(1.05);transform-origin:100% 71%;">45</span>
<span style="position:absolute;left:640.00px;top:545.11px;line-height:24px;font-family:'Liberation Mono', monospace;font-size:18.8px;color:#d4d4d4;white-space:pre;letter-spacing:-0.562px;">        }</span>
<span style="position:absolute;left:578.76px;top:571.88px;line-height:24px;font-family:'Liberation Mono', monospace;font-size:18.8px;color:#858585;white-space:pre;letter-spacing:-0.562px;transform:scale(1.05);transform-origin:100% 71%;">46</span>
<span style="position:absolute;left:578.76px;top:598.65px;line-height:24px;font-family:'Liberation Mono', monospace;font-size:18.8px;color:#858585;white-space:pre;letter-spacing:-0.562px;transform:scale(1.05);transform-origin:100% 71%;">47</span>
<span style="position:absolute;left:640.00px;top:598.65px;line-height:24px;font-family:'Liberation Mono', monospace;font-size:18.8px;color:#d4d4d4;white-space:pre;letter-spacing:-0.562px;">        <span style="color:#9cdcfe">axios</span>.<span style="color:#dcdcaa">get</span>(<span style="color:#dcdcaa">encodeURI</span>(<span style="color:#9cdcfe">TRANSLATE_URL</span> + <span style="color:#9cdcfe">strs</span>.<span style="color:#dcdcaa">join</span>(<span style="color:#ce9178">"|"</span>)))</span>
<span style="position:absolute;left:578.76px;top:625.42px;line-height:24px;font-family:'Liberation Mono', monospace;font-size:18.8px;color:#858585;white-space:pre;letter-spacing:-0.562px;transform:scale(1.05);transform-origin:100% 71%;">48</span>
<span style="position:absolute;left:640.00px;top:625.42px;line-height:24px;font-family:'Liberation Mono', monospace;font-size:18.8px;color:#d4d4d4;white-space:pre;letter-spacing:-0.562px;">          .<span style="color:#dcdcaa">then</span>(<span style="color:#9cdcfe">resp</span> <span style="color:#569cd6">=&gt;</span> {</span>
<span style="position:absolute;left:578.76px;top:652.19px;line-height:24px;font-family:'Liberation Mono', monospace;font-size:18.8px;color:#858585;white-space:pre;letter-spacing:-0.562px;transform:scale(1.05);transform-origin:100% 71%;">49</span>
<span style="position:absolute;left:640.00px;top:652.19px;line-height:24px;font-family:'Liberation Mono', monospace;font-size:18.8px;color:#d4d4d4;white-space:pre;letter-spacing:-0.562px;">            <span style="color:#4ec9b0">console</span>.<span style="color:#dcdcaa">log</span>(<span style="color:#ce9178">'got response: '</span> + <span style="color:#4ec9b0">JSON</span>.<span style="color:#dcdcaa">stringify</span>(<span style="color:#9cdcfe">resp</span>.<span style="color:#9cdcfe">data</span>))</span>
<span style="position:absolute;left:578.76px;top:678.96px;line-height:24px;font-family:'Liberation Mono', monospace;font-size:18.8px;color:#858585;white-space:pre;letter-spacing:-0.562px;transform:scale(1.05);transform-origin:100% 71%;">50</span>
<span style="position:absolute;left:640.00px;top:678.96px;line-height:24px;font-family:'Liberation Mono', monospace;font-size:18.8px;color:#d4d4d4;white-space:pre;letter-spacing:-0.562px;">            <span style="color:#569cd6">var</span> <span style="color:#9cdcfe">translations</span> = <span style="color:#9cdcfe">resp</span>.<span style="color:#9cdcfe">data</span>;</span>
<span style="position:absolute;left:578.76px;top:705.73px;line-height:24px;font-family:'Liberation Mono', monospace;font-size:18.8px;color:#858585;white-space:pre;letter-spacing:-0.562px;transform:scale(1.05);transform-origin:100% 71%;">51</span>
<span style="position:absolute;left:640.00px;top:705.73px;line-height:24px;font-family:'Liberation Mono', monospace;font-size:18.8px;color:#d4d4d4;white-space:pre;letter-spacing:-0.562px;">            <span style="color:#569cd6">var</span> <span style="color:#9cdcfe">messages</span> = [];</span>
<span style="position:absolute;left:578.76px;top:732.50px;line-height:24px;font-family:'Liberation Mono', monospace;font-size:18.8px;color:#858585;white-space:pre;letter-spacing:-0.562px;transform:scale(1.05);transform-origin:100% 71%;">52</span>
<span style="position:absolute;left:640.00px;top:732.50px;line-height:24px;font-family:'Liberation Mono', monospace;font-size:18.8px;color:#d4d4d4;white-space:pre;letter-spacing:-0.562px;">            <span style="color:#c586c0">for</span> (<span style="color:#569cd6">var</span> <span style="color:#9cdcfe">i</span> = <span style="color:#b5cea8">0</span>; <span style="color:#9cdcfe">i</span> &lt; <span style="color:#9cdcfe">translations</span>.<span style="color:#9cdcfe">length</span>; <span style="color:#9cdcfe">i</span>++) {</span>
<span style="position:absolute;left:578.76px;top:759.27px;line-height:24px;font-family:'Liberation Mono', monospace;font-size:18.8px;color:#858585;white-space:pre;letter-spacing:-0.562px;transform:scale(1.05);transform-origin:100% 71%;">53</span>
<span style="position:absolute;left:640.00px;top:759.27px;line-height:24px;font-family:'Liberation Mono', monospace;font-size:18.8px;color:#d4d4d4;white-space:pre;letter-spacing:-0.562px;">              <span style="color:#569cd6">var</span> <span style="color:#9cdcfe">e</span> = <span style="color:#9cdcfe">entries</span>[<span style="color:#9cdcfe">i</span>];</span>
<span style="position:absolute;left:578.76px;top:786.04px;line-height:24px;font-family:'Liberation Mono', monospace;font-size:18.8px;color:#c6c6c6;white-space:pre;letter-spacing:-0.562px;transform:scale(1.05);transform-origin:100% 71%;">54</span>
<span style="position:absolute;left:640.00px;top:786.04px;line-height:24px;font-family:'Liberation Mono', monospace;font-size:18.8px;color:#d4d4d4;white-space:pre;letter-spacing:-0.562px;">              <span style="color:#569cd6">var</span> <span style="color:#9cdcfe">t</span> =<span style="color:#9cdcfe">translations</span>[<span style="color:#9cdcfe">i</span>];</span>
<span style="position:absolute;left:578.76px;top:812.81px;line-height:24px;font-family:'Liberation Mono', monospace;font-size:18.8px;color:#858585;white-space:pre;letter-spacing:-0.562px;transform:scale(1.05);transform-origin:100% 71%;">55</span>
<span style="position:absolute;left:640.00px;top:812.81px;line-height:24px;font-family:'Liberation Mono', monospace;font-size:18.8px;color:#d4d4d4;white-space:pre;letter-spacing:-0.562px;">              <span style="color:#9cdcfe">messages</span>.<span style="color:#dcdcaa">push</span>({</span>
<span style="position:absolute;left:578.76px;top:839.58px;line-height:24px;font-family:'Liberation Mono', monospace;font-size:18.8px;color:#858585;white-space:pre;letter-spacing:-0.562px;transform:scale(1.05);transform-origin:100% 71%;">56</span>
<span style="position:absolute;left:640.00px;top:839.58px;line-height:24px;font-family:'Liberation Mono', monospace;font-size:18.8px;color:#d4d4d4;white-space:pre;letter-spacing:-0.562px;">                <span style="color:#9cdcfe">name</span>: <span style="color:#9cdcfe">e</span>.<span style="color:#9cdcfe">name</span>,</span>
<span style="position:absolute;left:578.76px;top:866.35px;line-height:24px;font-family:'Liberation Mono', monospace;font-size:18.8px;color:#858585;white-space:pre;letter-spacing:-0.562px;transform:scale(1.05);transform-origin:100% 71%;">57</span>
<span style="position:absolute;left:640.00px;top:866.35px;line-height:24px;font-family:'Liberation Mono', monospace;font-size:18.8px;color:#d4d4d4;white-space:pre;letter-spacing:-0.562px;">                <span style="color:#9cdcfe">body</span>: <span style="color:#9cdcfe">e</span>.<span style="color:#9cdcfe">body</span>,</span>
<span style="position:absolute;left:578.76px;top:893.12px;line-height:24px;font-family:'Liberation Mono', monospace;font-size:18.8px;color:#858585;white-space:pre;letter-spacing:-0.562px;transform:scale(1.05);transform-origin:100% 71%;">58</span>
<span style="position:absolute;left:640.00px;top:893.12px;line-height:24px;font-family:'Liberation Mono', monospace;font-size:18.8px;color:#d4d4d4;white-space:pre;letter-spacing:-0.562px;">                <span style="color:#9cdcfe">timestamp</span>: <span style="color:#9cdcfe">e</span>.<span style="color:#9cdcfe">timestamp</span>,</span>
<span style="position:absolute;left:578.76px;top:919.89px;line-height:24px;font-family:'Liberation Mono', monospace;font-size:18.8px;color:#858585;white-space:pre;letter-spacing:-0.562px;transform:scale(1.05);transform-origin:100% 71%;">59</span>
<span style="position:absolute;left:640.00px;top:919.89px;line-height:24px;font-family:'Liberation Mono', monospace;font-size:18.8px;color:#d4d4d4;white-space:pre;letter-spacing:-0.562px;">                <span style="color:#9cdcfe">english</span>: <span style="color:#9cdcfe">t</span>.<span style="color:#9cdcfe">english</span>,</span>
<span style="position:absolute;left:578.76px;top:946.66px;line-height:24px;font-family:'Liberation Mono', monospace;font-size:18.8px;color:#858585;white-space:pre;letter-spacing:-0.562px;transform:scale(1.05);transform-origin:100% 71%;">60</span>
<span style="position:absolute;left:640.00px;top:946.66px;line-height:24px;font-family:'Liberation Mono', monospace;font-size:18.8px;color:#d4d4d4;white-space:pre;letter-spacing:-0.562px;">                <span style="color:#9cdcfe">german</span>: <span style="color:#9cdcfe">t</span>.<span style="color:#9cdcfe">german</span></span>
<div style="position:absolute;left:640.00px;top:933.30px;width:885.60px;height:15.50px;background:rgba(121,121,121,0.35);"></div>
</div>
<div style="position:absolute;left:547.9px;top:737.7px;width:12.9px;height:12.9px;border-radius:50%;background:#e51400;"></div>
<svg style="left:549.1px;top:790.6px" width="13.4" height="14.6" viewBox="0 0 13.4 14.6"><path d="M1.2 0.6 H7.2 L13 7.3 L7.2 14 H1.2 Q0.4 14 0.4 13.2 V1.4 Q0.4 0.6 1.2 0.6 Z" fill="#ffcc00"/></svg>
<div style="position:absolute;left:607.90px;top:784.55px;width:4.30px;height:26.67px;background:#0c7d9d;"></div>
<div style="position:absolute;left:1583.60px;top:109.00px;width:90.40px;height:840.00px;background:#1f1f1f;"></div>
<div style="position:absolute;left:1581.6px;top:109px;width:3.4px;height:840px;background:linear-gradient(90deg,rgba(0,0,0,0),rgba(0,0,0,0.45));"></div>
<svg style="left:0;top:0" width="1700" height="986" viewBox="0 0 1700 986" fill="none" stroke-width="1.2" opacity="0.55"><path stroke="#6a9955" d="M1584.8 168.6h2.2M1588.2 168.6h6.7M1596.0 168.6h2.2M1599.4 168.6h4.5M1605.0 168.6h6.7M1612.8 168.6h2.2M1616.2 168.6h3.4M1620.6 168.6h5.6M1627.4 168.6h12.3M1640.8 168.6h9.0M1589.3 185.1h2.2M1592.6 185.1h9.0M1602.7 185.1h4.5M1608.3 185.1h2.2M1611.7 185.1h9.0M1621.8 185.1h4.5M1627.4 185.1h3.4M1631.8 185.1h9.0M1641.9 185.1h3.4M1646.4 185.1h3.4M1650.9 185.1h4.5M1656.5 185.1h2.2M1659.8 185.1h6.7M1667.7 185.1h3.4M1672.2 185.1h1.8M1636.3 247.2h2.2M1639.7 247.2h5.6M1634.1 253.4h2.2M1637.4 253.4h5.6M1587.0 263.8h2.2M1590.4 263.8h4.5M1596.0 263.8h3.4M1600.5 263.8h3.4M1605.0 263.8h7.8M1613.9 263.8h2.2M1617.3 263.8h3.4M1621.8 263.8h7.8M1630.7 263.8h3.4M1635.2 263.8h9.0M1645.3 263.8h2.2M1648.6 263.8h3.4M1653.1 263.8h9.0M1629.6 288.6h2.2M1633.0 288.6h5.6"/><path stroke="#569cd6" d="M1584.8 170.6h5.6M1607.2 172.7h2.2M1626.2 174.8h2.2M1633.0 174.8h1.1M1615.0 183.0h2.2M1608.3 189.3h2.2M1593.8 193.4h3.4M1593.8 195.5h3.4M1599.4 197.5h3.4M1608.3 207.9h2.2M1598.2 212.0h3.4M1598.2 214.1h3.4M1603.8 216.2h3.4M1600.5 218.2h3.4M1600.5 220.3h3.4M1584.8 110.6h5.6M1584.8 112.7h5.6M1584.8 114.7h5.6M1584.8 116.8h5.6M1584.8 118.9h5.6M1584.8 120.9h5.6M1584.8 125.1h5.6M1584.8 129.2h5.6M1584.8 133.4h5.6M1616.2 133.4h2.2M1630.7 133.4h1.1M1584.8 137.5h5.6M1584.8 141.6h5.6M1618.4 141.6h2.2M1635.2 141.6h1.1M1584.8 154.1h5.6M1635.2 164.4h5.6M1598.2 238.9h5.6M1610.6 245.1h2.2M1610.6 251.4h2.2M1620.6 261.7h2.2M1587.0 267.9h5.6M1587.0 270.0h5.6M1606.1 280.3h2.2M1603.8 286.5h2.2"/><path stroke="#9cdcfe" d="M1591.5 170.6h4.5M1599.4 170.6h7.8M1608.3 170.6h3.4M1612.8 170.6h4.5M1584.8 172.7h3.4M1597.1 172.7h4.5M1628.5 174.8h4.5M1584.8 183.0h6.7M1603.8 183.0h3.4M1609.4 183.0h3.4M1589.3 187.2h5.6M1600.5 187.2h12.3M1598.2 189.3h9.0M1645.3 191.3h9.0M1655.4 191.3h4.5M1598.2 193.4h7.8M1609.4 193.4h9.0M1619.5 193.4h4.5M1598.2 195.5h4.5M1603.8 197.5h1.1M1611.7 197.5h1.1M1616.2 197.5h7.8M1625.1 197.5h6.7M1634.1 197.5h1.1M1596.0 199.6h4.5M1607.2 199.6h7.8M1616.2 199.6h1.1M1619.5 199.6h4.5M1593.8 205.8h5.6M1616.2 205.8h14.6M1634.1 205.8h4.5M1602.7 207.9h4.5M1649.8 210.0h4.5M1655.4 210.0h4.5M1602.7 212.0h13.4M1619.5 212.0h4.5M1625.1 212.0h4.5M1602.7 214.1h9.0M1608.3 216.2h1.1M1616.2 216.2h1.1M1620.6 216.2h13.4M1635.2 216.2h6.7M1644.2 216.2h1.1M1605.0 218.2h1.1M1609.4 218.2h7.8M1618.4 218.2h1.1M1605.0 220.3h1.1M1608.3 220.3h13.4M1622.9 220.3h1.1M1600.5 222.4h9.0M1602.7 224.4h4.5M1609.4 224.4h1.1M1611.7 224.4h4.5M1602.7 226.5h4.5M1609.4 226.5h1.1M1611.7 226.5h4.5M1602.7 228.6h10.1M1615.0 228.6h1.1M1617.3 228.6h10.1M1602.7 230.7h7.8M1612.8 230.7h1.1M1615.0 230.7h7.8M1602.7 232.7h6.7M1611.7 232.7h1.1M1613.9 232.7h6.7M1591.5 110.6h7.8M1591.5 112.7h4.5M1591.5 114.7h3.4M1591.5 116.8h5.6M1591.5 118.9h11.2M1591.5 120.9h6.7M1591.5 125.1h4.5M1591.5 129.2h12.3M1607.2 129.2h7.8M1616.2 129.2h3.4M1620.6 129.2h12.3M1591.5 133.4h12.3M1618.4 133.4h12.3M1591.5 137.5h14.6M1609.4 137.5h7.8M1618.4 137.5h3.4M1622.9 137.5h14.6M1591.5 141.6h14.6M1620.6 141.6h14.6M1584.8 145.8h3.4M1584.8 149.9h3.4M1603.8 149.9h4.5M1615.0 149.9h10.1M1591.5 154.1h6.7M1601.6 154.1h7.8M1584.8 158.2h3.4M1593.8 158.2h6.7M1584.8 162.3h3.4M1593.8 162.3h7.8M1584.8 164.4h6.7M1597.1 164.4h11.2M1624.0 164.4h9.0M1605.0 238.9h6.7M1615.0 238.9h4.5M1637.4 238.9h9.0M1598.2 241.0h3.4M1621.8 241.0h9.0M1633.0 241.0h6.7M1603.8 245.1h5.6M1625.1 247.2h5.6M1603.8 251.4h5.6M1622.9 253.4h5.6M1584.8 261.7h6.7M1609.4 261.7h3.4M1615.0 261.7h3.4M1593.8 267.9h1.1M1598.2 267.9h3.4M1602.7 267.9h4.5M1593.8 270.0h1.1M1598.2 270.0h3.4M1602.7 270.0h4.5M1587.0 274.1h5.6M1599.4 274.1h12.3M1589.3 276.2h4.5M1596.0 276.2h3.4M1600.5 276.2h4.5M1606.1 276.2h4.5M1589.3 278.3h4.5M1596.0 278.3h3.4M1600.5 278.3h4.5M1606.1 278.3h7.8M1596.0 280.3h9.0M1626.2 282.4h9.0M1636.3 282.4h4.5M1591.5 284.5h3.4M1597.1 286.5h5.6M1618.4 288.6h5.6"/><path stroke="#d4d4d4" d="M1597.1 170.6h1.1M1607.2 170.6h1.1M1611.7 170.6h1.1M1618.4 170.6h2.2M1626.2 170.6h1.1M1588.2 172.7h1.1M1596.0 172.7h1.1M1601.6 172.7h1.1M1603.8 172.7h2.2M1610.6 172.7h1.1M1594.9 174.8h1.1M1599.4 174.8h1.1M1635.2 174.8h2.2M1594.9 176.8h1.1M1599.4 176.8h1.1M1626.2 176.8h2.2M1584.8 178.9h3.4M1591.5 183.0h1.1M1596.0 183.0h1.1M1600.5 183.0h1.1M1602.7 183.0h1.1M1607.2 183.0h1.1M1612.8 183.0h1.1M1618.4 183.0h1.1M1594.9 187.2h1.1M1599.4 187.2h1.1M1612.8 187.2h1.1M1591.5 189.3h1.1M1597.1 189.3h1.1M1611.7 189.3h1.1M1601.6 191.3h1.1M1606.1 191.3h1.1M1626.2 191.3h1.1M1633.0 191.3h1.1M1644.2 191.3h1.1M1654.2 191.3h1.1M1659.8 191.3h2.2M1607.2 193.4h1.1M1618.4 193.4h1.1M1625.1 193.4h2.2M1628.5 193.4h3.4M1603.8 195.5h1.1M1606.1 195.5h3.4M1598.2 197.5h1.1M1606.1 197.5h1.1M1609.4 197.5h1.1M1613.9 197.5h1.1M1624.0 197.5h1.1M1631.8 197.5h1.1M1635.2 197.5h3.4M1639.7 197.5h1.1M1600.5 199.6h1.1M1606.1 199.6h1.1M1615.0 199.6h1.1M1617.3 199.6h2.2M1624.0 199.6h2.2M1593.8 201.7h1.1M1599.4 205.8h1.1M1603.8 205.8h1.1M1615.0 205.8h1.1M1631.8 205.8h1.1M1638.6 205.8h1.1M1644.2 205.8h1.1M1648.6 205.8h3.4M1596.0 207.9h1.1M1601.6 207.9h1.1M1611.7 207.9h1.1M1606.1 210.0h1.1M1610.6 210.0h1.1M1630.7 210.0h1.1M1637.4 210.0h1.1M1648.6 210.0h1.1M1654.2 210.0h1.1M1659.8 210.0h2.2M1617.3 212.0h1.1M1624.0 212.0h1.1M1629.6 212.0h1.1M1612.8 214.1h1.1M1615.0 214.1h3.4M1602.7 216.2h1.1M1610.6 216.2h1.1M1613.9 216.2h1.1M1618.4 216.2h1.1M1634.1 216.2h1.1M1641.9 216.2h1.1M1645.3 216.2h3.4M1649.8 216.2h1.1M1607.2 218.2h1.1M1617.3 218.2h1.1M1619.5 218.2h2.2M1607.2 220.3h1.1M1621.8 220.3h1.1M1624.0 220.3h2.2M1609.4 222.4h1.1M1615.0 222.4h2.2M1607.2 224.4h1.1M1610.6 224.4h1.1M1616.2 224.4h1.1M1607.2 226.5h1.1M1610.6 226.5h1.1M1616.2 226.5h1.1M1612.8 228.6h1.1M1616.2 228.6h1.1M1627.4 228.6h1.1M1610.6 230.7h1.1M1613.9 230.7h1.1M1622.9 230.7h1.1M1609.4 232.7h1.1M1612.8 232.7h1.1M1600.5 110.6h1.1M1610.6 110.6h1.1M1621.8 110.6h1.1M1597.1 112.7h1.1M1607.2 112.7h1.1M1615.0 112.7h1.1M1596.0 114.7h1.1M1606.1 114.7h1.1M1617.3 114.7h3.4M1598.2 116.8h1.1M1603.8 116.8h1.1M1609.4 116.8h1.1M1603.8 118.9h1.1M1613.9 118.9h1.1M1629.6 118.9h1.1M1599.4 120.9h1.1M1609.4 120.9h1.1M1619.5 120.9h1.1M1597.1 125.1h1.1M1607.2 125.1h1.1M1618.4 125.1h1.1M1605.0 129.2h1.1M1615.0 129.2h1.1M1619.5 129.2h1.1M1634.1 129.2h2.2M1605.0 133.4h1.1M1607.2 137.5h1.1M1617.3 137.5h1.1M1621.8 137.5h1.1M1638.6 137.5h2.2M1607.2 141.6h1.1M1588.2 145.8h1.1M1592.6 145.8h1.1M1608.3 145.8h1.1M1616.2 145.8h1.1M1588.2 149.9h1.1M1592.6 149.9h1.1M1601.6 149.9h1.1M1608.3 149.9h1.1M1613.9 149.9h1.1M1625.1 149.9h1.1M1635.2 149.9h2.2M1599.4 154.1h1.1M1609.4 154.1h1.1M1617.3 154.1h2.2M1588.2 158.2h1.1M1592.6 158.2h1.1M1600.5 158.2h1.1M1588.2 162.3h1.1M1592.6 162.3h1.1M1601.6 162.3h1.1M1609.4 162.3h1.1M1619.5 162.3h2.2M1591.5 164.4h1.1M1596.0 164.4h1.1M1608.3 164.4h1.1M1620.6 164.4h2.2M1633.0 164.4h1.1M1641.9 164.4h3.4M1600.5 234.8h2.2M1598.2 236.9h1.1M1612.8 238.9h1.1M1619.5 238.9h1.1M1636.3 238.9h1.1M1646.4 238.9h1.1M1601.6 241.0h1.1M1609.4 241.0h1.1M1617.3 241.0h1.1M1619.5 241.0h1.1M1630.7 241.0h1.1M1640.8 241.0h2.2M1596.0 243.1h2.2M1596.0 245.1h1.1M1602.7 245.1h1.1M1613.9 245.1h1.1M1606.1 247.2h1.1M1610.6 247.2h1.1M1622.9 247.2h1.1M1630.7 247.2h1.1M1596.0 249.3h2.2M1593.8 251.4h3.4M1602.7 251.4h1.1M1613.9 251.4h1.1M1603.8 253.4h1.1M1608.3 253.4h1.1M1620.6 253.4h1.1M1628.5 253.4h1.1M1591.5 255.5h2.2M1584.8 257.6h3.4M1591.5 261.7h1.1M1597.1 261.7h1.1M1606.1 261.7h1.1M1608.3 261.7h1.1M1612.8 261.7h1.1M1618.4 261.7h1.1M1624.0 261.7h1.1M1594.9 265.9h1.1M1599.4 265.9h1.1M1610.6 265.9h1.1M1596.0 267.9h1.1M1601.6 267.9h1.1M1596.0 270.0h1.1M1601.6 270.0h1.1M1592.6 274.1h1.1M1598.2 274.1h1.1M1611.7 274.1h1.1M1613.9 274.1h1.1M1593.8 276.2h1.1M1599.4 276.2h1.1M1605.0 276.2h1.1M1610.6 276.2h1.1M1593.8 278.3h1.1M1599.4 278.3h1.1M1605.0 278.3h1.1M1587.0 280.3h3.4M1594.9 280.3h1.1M1609.4 280.3h1.1M1599.4 282.4h1.1M1603.8 282.4h1.1M1624.0 282.4h1.1M1635.2 282.4h1.1M1640.8 282.4h1.1M1594.9 284.5h1.1M1605.0 284.5h1.1M1609.4 284.5h1.1M1587.0 286.5h3.4M1596.0 286.5h1.1M1607.2 286.5h1.1M1599.4 288.6h1.1M1603.8 288.6h1.1M1616.2 288.6h1.1M1624.0 288.6h1.1M1587.0 290.7h2.2M1584.8 292.8h3.4"/><path stroke="#b5cea8" d="M1621.8 170.6h4.5M1608.3 197.5h1.1M1612.8 216.2h1.1"/><path stroke="#dcdcaa" d="M1589.3 172.7h6.7M1596.0 174.8h3.4M1596.0 176.8h3.4M1592.6 183.0h3.4M1596.0 187.2h3.4M1592.6 189.3h4.5M1602.7 191.3h3.4M1634.1 191.3h10.1M1601.6 199.6h4.5M1600.5 205.8h3.4M1605.0 205.8h10.1M1639.7 205.8h4.5M1597.1 207.9h4.5M1607.2 210.0h3.4M1638.6 210.0h10.1M1610.6 222.4h4.5M1602.7 110.6h7.8M1599.4 112.7h7.8M1598.2 114.7h7.8M1600.5 116.8h3.4M1606.1 118.9h7.8M1601.6 120.9h7.8M1599.4 125.1h7.8M1589.3 145.8h3.4M1589.3 149.9h3.4M1609.4 149.9h4.5M1610.6 154.1h6.7M1589.3 158.2h3.4M1589.3 162.3h3.4M1602.7 162.3h6.7M1592.6 164.4h3.4M1609.4 164.4h11.2M1620.6 238.9h15.7M1602.7 241.0h6.7M1597.1 245.1h5.6M1607.2 247.2h3.4M1597.1 251.4h5.6M1605.0 253.4h3.4M1592.6 261.7h4.5M1596.0 265.9h3.4M1593.8 274.1h4.5M1590.4 280.3h4.5M1600.5 282.4h3.4M1596.0 284.5h9.0M1590.4 286.5h5.6M1600.5 288.6h3.4"/><path stroke="#4ec9b0" d="M1587.0 174.8h7.8M1587.0 176.8h7.8M1593.8 191.3h7.8M1628.5 191.3h4.5M1598.2 210.0h7.8M1633.0 210.0h4.5M1598.2 247.2h7.8M1596.0 253.4h7.8M1587.0 265.9h7.8M1591.5 282.4h7.8M1591.5 288.6h7.8"/><path stroke="#ce9178" d="M1600.5 174.8h4.5M1606.1 174.8h10.1M1617.3 174.8h2.2M1620.6 174.8h4.5M1634.1 174.8h1.1M1600.5 176.8h6.7M1608.3 176.8h6.7M1616.2 176.8h2.2M1619.5 176.8h6.7M1597.1 183.0h3.4M1607.2 191.3h4.5M1612.8 191.3h10.1M1624.0 191.3h1.1M1645.3 205.8h3.4M1611.7 210.0h4.5M1617.3 210.0h10.1M1628.5 210.0h1.1M1611.7 110.6h10.1M1608.3 112.7h6.7M1607.2 114.7h10.1M1605.0 116.8h4.5M1615.0 118.9h14.6M1610.6 120.9h9.0M1608.3 125.1h10.1M1637.4 129.2h17.9M1607.2 133.4h9.0M1631.8 133.4h11.2M1641.9 137.5h17.9M1609.4 141.6h9.0M1636.3 141.6h7.8M1593.8 145.8h5.6M1600.5 145.8h7.8M1610.6 145.8h5.6M1593.8 149.9h7.8M1627.4 149.9h7.8M1610.6 162.3h9.0M1610.6 241.0h6.7M1611.7 247.2h7.8M1620.6 247.2h1.1M1609.4 253.4h7.8M1618.4 253.4h1.1M1598.2 261.7h7.8M1600.5 265.9h10.1M1605.0 282.4h4.5M1610.6 282.4h10.1M1621.8 282.4h1.1M1606.1 284.5h3.4M1605.0 288.6h7.8M1613.9 288.6h1.1"/><path stroke="#c586c0" d="M1593.8 197.5h3.4M1598.2 216.2h3.4"/></svg>
<div style="position:absolute;left:1673.80px;top:109.00px;width:24.20px;height:840.00px;background:#242424;"></div>
<div style="position:absolute;left:1673.80px;top:109.00px;width:1.00px;height:840.00px;background:#303030;"></div>
<div style="position:absolute;left:1674.80px;top:304.60px;width:23.20px;height:219.50px;background:#3f3f3f;"></div>
<div style="position:absolute;left:1674.80px;top:480.00px;width:23.20px;height:2.00px;background:#a0a0a0;"></div>
<div style="position:absolute;left:1675.00px;top:482.00px;width:6.40px;height:6.10px;background:#346ea0;"></div>
<span style="position:absolute;left:565.50px;top:79.55px;line-height:25px;font-family:'Liberation Sans', sans-serif;font-size:19.2px;color:#a9a9a9;white-space:pre;letter-spacing:0.049px;">src</span>
<svg style="left:599.80px;top:87.00px" width="6.4" height="11.2" viewBox="0 0 6.4 11.2"><path d="M0.7 1.6 L5.7 5.6 L0.7 9.6 Z" fill="none" stroke="#a9a9a9" stroke-width="1.3"/></svg>
<span style="position:absolute;left:615.60px;top:79.55px;line-height:25px;font-family:'Liberation Sans', sans-serif;font-size:19.2px;color:#a9a9a9;white-space:pre;letter-spacing:0.397px;">frontend</span>
<svg style="left:698.00px;top:87.00px" width="6.4" height="11.2" viewBox="0 0 6.4 11.2"><path d="M0.7 1.6 L5.7 5.6 L0.7 9.6 Z" fill="none" stroke="#a9a9a9" stroke-width="1.3"/></svg>
<span style="position:absolute;left:720.00px;top:82.93px;line-height:20px;font-family:'Liberation Sans', sans-serif;font-size:15.2px;color:#cbcb41;white-space:pre;font-weight:700;letter-spacing:-1.852px;">JS</span>
<span style="position:absolute;left:746.50px;top:79.55px;line-height:25px;font-family:'Liberation Sans', sans-serif;font-size:19.2px;color:#a9a9a9;white-space:pre;letter-spacing:-0.091px;">app.js</span>
<svg style="left:806.40px;top:87.00px" width="6.4" height="11.2" viewBox="0 0 6.4 11.2"><path d="M0.7 1.6 L5.7 5.6 L0.7 9.6 Z" fill="none" stroke="#a9a9a9" stroke-width="1.3"/></svg>
<svg style="left:823.70px;top:83.6px" width="16.6" height="18.6" viewBox="0 0 16.6 18.6" fill="none" stroke="#b180d7" stroke-width="1.5" stroke-linejoin="round">
<path d="M8.3 0.9 L15.7 4.9 V13.5 L8.3 17.7 L0.9 13.5 V4.9 Z"/><path d="M0.9 4.9 L8.3 9.1 L15.7 4.9 M8.3 9.1 V17.7"/></svg>
<span style="position:absolute;left:845.60px;top:79.55px;line-height:25px;font-family:'Liberation Sans', sans-serif;font-size:19.2px;color:#a9a9a9;white-space:pre;letter-spacing:0.338px;">router.get("/") callback</span>
<svg style="left:1049.60px;top:87.00px" width="6.4" height="11.2" viewBox="0 0 6.4 11.2"><path d="M0.7 1.6 L5.7 5.6 L0.7 9.6 Z" fill="none" stroke="#a9a9a9" stroke-width="1.3"/></svg>
<svg style="left:1067.60px;top:83.6px" width="16.6" height="18.6" viewBox="0 0 16.6 18.6" fill="none" stroke="#b180d7" stroke-width="1.5" stroke-linejoin="round">
<path d="M8.3 0.9 L15.7 4.9 V13.5 L8.3 17.7 L0.9 13.5 V4.9 Z"/><path d="M0.9 4.9 L8.3 9.1 L15.7 4.9 M8.3 9.1 V17.7"/></svg>
<span style="position:absolute;left:1089.50px;top:79.55px;line-height:25px;font-family:'Liberation Sans', sans-serif;font-size:19.2px;color:#a9a9a9;white-space:pre;letter-spacing:0.201px;">then() callback</span>
<svg style="left:1225.40px;top:87.00px" width="6.4" height="11.2" viewBox="0 0 6.4 11.2"><path d="M0.7 1.6 L5.7 5.6 L0.7 9.6 Z" fill="none" stroke="#a9a9a9" stroke-width="1.3"/></svg>
<svg style="left:1242.80px;top:83.6px" width="16.6" height="18.6" viewBox="0 0 16.6 18.6" fill="none" stroke="#b180d7" stroke-width="1.5" stroke-linejoin="round">
<path d="M8.3 0.9 L15.7 4.9 V13.5 L8.3 17.7 L0.9 13.5 V4.9 Z"/><path d="M0.9 4.9 L8.3 9.1 L15.7 4.9 M8.3 9.1 V17.7"/></svg>
<span style="position:absolute;left:1265.90px;top:79.55px;line-height:25px;font-family:'Liberation Sans', sans-serif;font-size:19.2px;color:#a9a9a9;white-space:pre;letter-spacing:0.201px;">then() callback</span>
<svg style="left:1402.20px;top:87.00px" width="6.4" height="11.2" viewBox="0 0 6.4 11.2"><path d="M0.7 1.6 L5.7 5.6 L0.7 9.6 Z" fill="none" stroke="#a9a9a9" stroke-width="1.3"/></svg>
<svg style="left:1418px;top:85px" width="19.4" height="15" viewBox="0 0 19.4 15">
<path d="M3.6 1.6 H0.8 V13.4 H3.6 M15.8 1.6 H18.6 V13.4 H15.8" fill="none" stroke="#c5c5c5" stroke-width="1.5"/>
<path d="M4.6 6.4 L11.4 3 L15.2 4.8 V9.2 L8.4 12.4 L4.6 10.6 Z" fill="#75beff"/></svg>
<span style="position:absolute;left:1442.40px;top:79.55px;line-height:25px;font-family:'Liberation Sans', sans-serif;font-size:19.2px;color:#a9a9a9;white-space:pre;letter-spacing:0.056px;">t</span>
<svg style="left:1562.6px;top:39.2px" width="22" height="24" viewBox="0 0 22 24" fill="none" stroke="#c5c5c5">
<circle cx="3.6" cy="3.8" r="2.4" stroke-width="1.6"/><circle cx="18.2" cy="19.4" r="2.4" stroke-width="1.6"/>
<path d="M3.6 6.4 V14 Q3.6 18.4 8 18.4 H9" stroke-width="2.6"/><path d="M8 13.6 L12.8 18.4 L8 23.2 Z" fill="#c5c5c5" stroke="none"/>
<path d="M18.2 16.8 V9.2 Q18.2 4.8 13.8 4.8 H13" stroke-width="2.6"/><path d="M14 0 L9.2 4.8 L14 9.6 Z" fill="#c5c5c5" stroke="none"/>
</svg>
<svg style="left:1610.4px;top:41.8px" width="21.8" height="18.6" viewBox="0 0 21.8 18.6" fill="none" stroke="#c5c5c5" stroke-width="1.7">
<rect x="1" y="1" width="19.8" height="16.6" stroke-width="2"/><path d="M1 3 H20.8" stroke-width="2.6"/><path d="M10.9 4.2 V17.6" stroke-width="2.6"/></svg>
<div style="position:absolute;left:1659.5px;top:48.1px;width:4.6px;height:4.6px;border-radius:50%;background:#c5c5c5;"></div>
<div style="position:absolute;left:1666.9px;top:48.1px;width:4.6px;height:4.6px;border-radius:50%;background:#c5c5c5;"></div>
<div style="position:absolute;left:1674.4px;top:48.1px;width:4.6px;height:4.6px;border-radius:50%;background:#c5c5c5;"></div>
<div style="position:absolute;left:0;top:0;width:1700px;height:986px;clip-path:inset(25.00px 500.00px 886.00px 540.00px);">
<div style="position:absolute;left:557.4px;top:20px;width:582.6px;height:51.6px;background:#2e2e2e;box-shadow:0 3px 10px 2px rgba(0,0,0,0.92);"></div>
</div>
<svg style="left:575.1px;top:41.9px" width="10" height="15.2" viewBox="0 0 10 15.2" fill="#7e7e7e"><circle cx="1.6" cy="1.6" r="1.5"/><circle cx="7.6" cy="1.6" r="1.5"/><circle cx="1.6" cy="7.5" r="1.5"/><circle cx="7.6" cy="7.5" r="1.5"/><circle cx="1.6" cy="13.4" r="1.5"/><circle cx="7.6" cy="13.4" r="1.5"/></svg>
<svg style="left:607.6px;top:41.2px" width="18" height="16" viewBox="0 0 18 16"><rect x="0.3" y="0" width="3.3" height="16" fill="#6cb8ff"/><path d="M6.8 0 L17.2 8 L6.8 16 Z" fill="#6cb8ff"/></svg>
<svg style="left:651px;top:37px" width="26" height="26" viewBox="0 0 26 26">
<path d="M3.4 13.2 A8.6 8.6 0 0 1 20.2 11" fill="none" stroke="#6cb8ff" stroke-width="3"/>
<path d="M22.6 4.2 V13.2 H13.6 Z" fill="#6cb8ff"/>
<circle cx="12.2" cy="19.5" r="3.1" fill="#cccccc"/></svg>
<svg style="left:700px;top:37px" width="22" height="26" viewBox="0 0 22 26">
<path d="M10.7 1.6 V13" stroke="#6cb8ff" stroke-width="2.8" fill="none"/>
<path d="M4.6 8.2 L10.7 14.6 L16.8 8.2" stroke="#6cb8ff" stroke-width="2.8" fill="none"/>
<circle cx="10.7" cy="19.5" r="3.1" fill="#cccccc"/></svg>
<svg style="left:747px;top:37px" width="22" height="26" viewBox="0 0 22 26">
<path d="M11 15 V3.6" stroke="#6cb8ff" stroke-width="2.8" fill="none"/>
<path d="M4.9 8.6 L11 2.2 L17.1 8.6" stroke="#6cb8ff" stroke-width="2.8" fill="none"/>
<circle cx="11" cy="19.5" r="3.1" fill="#cccccc"/></svg>
<svg style="left:794px;top:36px" width="26" height="26" viewBox="0 0 26 26">
<path d="M6.2 7.2 A8.8 8.8 0 1 1 4 14.6" fill="none" stroke="#89d185" stroke-width="2.9"/>
<path d="M2.2 2.2 V10.4 H10.4 Z" fill="#89d185"/></svg>
<svg style="left:845px;top:40px" width="18" height="18" viewBox="0 0 18 18">
<rect width="18" height="18" fill="#f48771"/>
<path d="M6 2.6 V6 M12 2.6 V6" stroke="#2d2d2d" stroke-width="1.6"/>
<path d="M4 6 H14 V8.6 Q14 11.6 10.4 12.2 V15.4 H7.6 V12.2 Q4 11.6 4 8.6 Z" fill="#2d2d2d"/></svg>
<div style="position:absolute;left:877.6px;top:36px;width:251.2px;height:24.6px;background:#353535;border-radius:5px;"></div>
<div style="position:absolute;left:0;top:0;width:1700px;height:986px;clip-path:inset(30.00px 591.20px 916.00px 885.00px);">
<span style="position:absolute;left:890.40px;top:38.85px;line-height:22px;font-family:'Liberation Sans', sans-serif;font-size:16.6px;color:#f0f0f0;white-space:pre;letter-spacing:0.761px;">8e66889f-3d4b-4bd9-a687-f5e3be573e6b</span>
</div>
<svg style="left:1112.8px;top:40.8px" width="8.2" height="15.4" viewBox="0 0 8.2 15.4"><path d="M4.1 0 L8.2 5.9 H0 Z M4.1 15.4 L8.2 9.5 H0 Z" fill="#f0f0f0"/></svg>
<div style="position:absolute;left:1068.3px;top:528.8px;width:497.4px;height:281.7px;background:#232324;border:1px solid #454545;"></div>
<span style="position:absolute;left:1100.40px;top:539.14px;line-height:22px;font-family:'Liberation Mono', monospace;font-size:17.1px;color:#cccccc;white-space:pre;letter-spacing:-0.487px;">Array(4) [Object, Object, Object, …]</span>
<div style="position:absolute;left:0;top:0;width:1700px;height:986px;clip-path:inset(564.80px 141.00px 180.20px 1077.60px);">
<span style="position:absolute;left:1122.00px;top:568.14px;line-height:22px;font-family:'Liberation Mono', monospace;font-size:17.1px;color:#9d9d9d;white-space:pre;letter-spacing:-0.482px;"><span style="color:#c586c0">length:</span> <span style="color:#b5cea8">4</span></span>
<svg style="left:1101.60px;top:598.74px" width="6.2" height="11" viewBox="0 0 6.2 11"><path d="M0.7 0.9 L5.6000000000000005 5.5 L0.7 10.1 Z" fill="none" stroke="#c5c5c5" stroke-width="1.5" stroke-linejoin="miter"/></svg>
<span style="position:absolute;left:1122.00px;top:594.88px;line-height:22px;font-family:'Liberation Mono', monospace;font-size:17.1px;color:#9d9d9d;white-space:pre;letter-spacing:-0.482px;"><span style="color:#c586c0">__proto__:</span> <span style="color:#9d9d9d">Array(0) [, …]</span></span>
<svg style="left:1101.60px;top:625.48px" width="6.2" height="11" viewBox="0 0 6.2 11"><path d="M0.7 0.9 L5.6000000000000005 5.5 L0.7 10.1 Z" fill="none" stroke="#c5c5c5" stroke-width="1.5" stroke-linejoin="miter"/></svg>
<span style="position:absolute;left:1122.00px;top:621.62px;line-height:22px;font-family:'Liberation Mono', monospace;font-size:17.1px;color:#9d9d9d;white-space:pre;letter-spacing:-0.482px;"><span style="color:#c586c0">0:</span> <span style="color:#9d9d9d">Object {english: "This is the only message here", german: "…</span></span>
<svg style="left:1100.40px;top:653.02px" width="9.4" height="9.4" viewBox="0 0 10 10"><path d="M10 0 V10 H0 Z" fill="#c5c5c5"/></svg>
<span style="position:absolute;left:1122.00px;top:648.36px;line-height:22px;font-family:'Liberation Mono', monospace;font-size:17.1px;color:#9d9d9d;white-space:pre;letter-spacing:-0.482px;"><span style="color:#c586c0">1:</span> <span style="color:#9d9d9d">Object {english: "We got the whole family together for", german: "…</span></span>
<span style="position:absolute;left:1133.40px;top:675.10px;line-height:22px;font-family:'Liberation Mono', monospace;font-size:17.1px;color:#9d9d9d;white-space:pre;letter-spacing:-0.482px;"><span style="color:#c586c0">english:</span> <span style="color:#ce9178">"We got the whole family together for the holiday</span></span>
<span style="position:absolute;left:1133.40px;top:701.84px;line-height:22px;font-family:'Liberation Mono', monospace;font-size:17.1px;color:#9d9d9d;white-space:pre;letter-spacing:-0.482px;"><span style="color:#c586c0">german:</span> <span style="color:#ce9178">"Wir haben die ganze Familie für die Feiertage</span></span>
<svg style="left:1113.00px;top:732.44px" width="6.2" height="11" viewBox="0 0 6.2 11"><path d="M0.7 0.9 L5.6000000000000005 5.5 L0.7 10.1 Z" fill="none" stroke="#c5c5c5" stroke-width="1.5" stroke-linejoin="miter"/></svg>
<span style="position:absolute;left:1133.40px;top:728.58px;line-height:22px;font-family:'Liberation Mono', monospace;font-size:17.1px;color:#9d9d9d;white-space:pre;letter-spacing:-0.482px;"><span style="color:#c586c0">__proto__:</span> <span style="color:#9d9d9d">Object {constructor: , __defineGetter__: , …</span></span>
<svg style="left:1101.60px;top:759.18px" width="6.2" height="11" viewBox="0 0 6.2 11"><path d="M0.7 0.9 L5.6000000000000005 5.5 L0.7 10.1 Z" fill="none" stroke="#c5c5c5" stroke-width="1.5" stroke-linejoin="miter"/></svg>
<span style="position:absolute;left:1122.00px;top:755.32px;line-height:22px;font-family:'Liberation Mono', monospace;font-size:17.1px;color:#9d9d9d;white-space:pre;letter-spacing:-0.482px;"><span style="color:#c586c0">2:</span> <span style="color:#9d9d9d">Object {english: "Ancient written Chinese texts were", german: "…</span></span>
<svg style="left:1101.60px;top:785.92px" width="6.2" height="11" viewBox="0 0 6.2 11"><path d="M0.7 0.9 L5.6000000000000005 5.5 L0.7 10.1 Z" fill="none" stroke="#c5c5c5" stroke-width="1.5" stroke-linejoin="miter"/></svg>
<span style="position:absolute;left:1122.00px;top:782.06px;line-height:22px;font-family:'Liberation Mono', monospace;font-size:17.1px;color:#9d9d9d;white-space:pre;letter-spacing:-0.482px;"><span style="color:#c586c0">3:</span> <span style="color:#9d9d9d">Object {english: "The quality at home was of no", german: "…</span></span>
<div style="position:absolute;left:1544.20px;top:564.80px;width:14.80px;height:225.80px;background:rgba(100,100,100,0.55);"></div>
<div style="position:absolute;left:1077.60px;top:791.20px;width:159.40px;height:14.60px;background:rgba(121,121,121,0.38);"></div>
</div>
<div style="position:absolute;left:1077.6px;top:564.8px;width:479.4px;height:239.0px;border:1px solid #19588a;"></div>
<div style="position:absolute;left:0.00px;top:948.70px;width:1700.00px;height:37.30px;background:#c65c2c;"></div>
<svg style="left:24.4px;top:955.6px" width="13" height="18" viewBox="0 0 13 18" fill="none" stroke="#ffffff" stroke-width="1.6">
<circle cx="2.9" cy="2.9" r="1.9"/><circle cx="2.9" cy="15.1" r="1.9"/><circle cx="10.1" cy="5.6" r="1.9"/>
<path d="M2.9 4.8 V13.2 M10.1 7.5 Q10.1 10.8 3.4 12.2"/></svg>
<span style="position:absolute;left:43.70px;top:954.70px;line-height:23px;font-family:'Liberation Sans', sans-serif;font-size:17.6px;color:#ffffff;white-space:pre;letter-spacing:0.131px;">master</span>
<svg style="left:122px;top:956.6px" width="16.4" height="17" viewBox="0 0 16.4 17" fill="none" stroke="#ffffff" stroke-width="2">
<path d="M2 7.6 A6.3 6.3 0 0 1 13.6 5"/><path d="M14.4 9.4 A6.3 6.3 0 0 1 2.8 12"/>
<path d="M15.6 1.2 V6.6 H10.2 Z" fill="#ffffff" stroke="none"/><path d="M0.8 15.8 V10.4 H6.2 Z" fill="#ffffff" stroke="none"/></svg>
<span style="position:absolute;left:143.20px;top:954.70px;line-height:23px;font-family:'Liberation Sans', sans-serif;font-size:17.6px;color:#ffffff;white-space:pre;">0</span>
<svg style="left:173.4px;top:958.6px" width="8" height="14" viewBox="0 0 8 14"><path d="M1 4.4 L5 1.5 V13.1" fill="none" stroke="#ffffff" stroke-width="1.7"/></svg>
<svg style="left:155.6px;top:958.4px" width="10" height="15" viewBox="0 0 10 15" fill="none" stroke="#ffffff" stroke-width="1.6"><path d="M5 1 V13 M0.8 8.8 L5 13 L9.2 8.8"/></svg>
<svg style="left:184.2px;top:958.4px" width="10" height="15" viewBox="0 0 10 15" fill="none" stroke="#ffffff" stroke-width="1.6"><path d="M5 13.6 V1.6 M0.8 5.8 L5 1.6 L9.2 5.8"/></svg>
<svg style="left:216.8px;top:957.6px" width="15.6" height="15.6" viewBox="0 0 15.6 15.6"><circle cx="7.8" cy="7.8" r="7.8" fill="#ffffff"/>
<path d="M4.6 4.6 L11 11 M11 4.6 L4.6 11" stroke="#c65c2c" stroke-width="2.1"/></svg>
<span style="position:absolute;left:240.20px;top:954.70px;line-height:23px;font-family:'Liberation Sans', sans-serif;font-size:17.6px;color:#ffffff;white-space:pre;">0</span>
<svg style="left:256.8px;top:957.4px" width="16" height="15.6" viewBox="0 0 16 15.6"><path d="M8 0.4 L15.8 15.2 H0.2 Z" fill="#ffffff"/>
<path d="M8 5.4 V10.4 M8 11.8 V13.8" stroke="#c65c2c" stroke-width="1.9"/></svg>
<span style="position:absolute;left:281.00px;top:954.70px;line-height:23px;font-family:'Liberation Sans', sans-serif;font-size:17.6px;color:#ffffff;white-space:pre;">0</span>
<svg style="left:317.6px;top:957px" width="12.6" height="17" viewBox="0 0 12.6 17"><path d="M0 0 L12.6 8.5 L0 17 Z" fill="#ffffff"/></svg>
<span style="position:absolute;left:336.80px;top:954.70px;line-height:23px;font-family:'Liberation Sans', sans-serif;font-size:17.6px;color:#ffffff;white-space:pre;letter-spacing:0.246px;">Debug Frontend on Kubernetes (guestbook)</span>
<svg style="left:714px;top:956.6px" width="16.4" height="17" viewBox="0 0 16.4 17" fill="none" stroke="#ffffff" stroke-width="2">
<path d="M2 7.6 A6.3 6.3 0 0 1 13.6 5"/><path d="M14.4 9.4 A6.3 6.3 0 0 1 2.8 12"/>
<path d="M15.6 1.2 V6.6 H10.2 Z" fill="#ffffff" stroke="none"/><path d="M0.8 15.8 V10.4 H6.2 Z" fill="#ffffff" stroke="none"/></svg>
<span style="position:absolute;left:735.60px;top:954.70px;line-height:23px;font-family:'Liberation Sans', sans-serif;font-size:17.6px;color:#ffffff;white-space:pre;letter-spacing:0.189px;">Cloud Code: Watching for changes...</span>
<span style="position:absolute;left:1135.80px;top:954.70px;line-height:23px;font-family:'Liberation Sans', sans-serif;font-size:17.6px;color:#ffffff;white-space:pre;letter-spacing:0.202px;">Ln 54, Col 23</span>
<span style="position:absolute;left:1265.40px;top:954.70px;line-height:23px;font-family:'Liberation Sans', sans-serif;font-size:17.6px;color:#ffffff;white-space:pre;letter-spacing:0.041px;">Spaces: 2</span>
<span style="position:absolute;left:1366.80px;top:954.70px;line-height:23px;font-family:'Liberation Sans', sans-serif;font-size:17.6px;color:#ffffff;white-space:pre;letter-spacing:0.435px;">UTF-8</span>
<span style="position:absolute;left:1441.60px;top:954.70px;line-height:23px;font-family:'Liberation Sans', sans-serif;font-size:17.6px;color:#ffffff;white-space:pre;letter-spacing:-1.165px;">LF</span>
<span style="position:absolute;left:1483.40px;top:954.70px;line-height:23px;font-family:'Liberation Sans', sans-serif;font-size:17.6px;color:#ffffff;white-space:pre;letter-spacing:0.154px;">JavaScript</span>
<svg style="left:1592px;top:955.2px" width="21" height="21" viewBox="0 0 21 21"><circle cx="10.5" cy="10.5" r="10.4" fill="#ffffff"/>
<circle cx="7" cy="7.8" r="1.6" fill="#c65c2c"/><circle cx="14" cy="7.8" r="1.6" fill="#c65c2c"/>
<path d="M4.6 11.8 Q10.5 20 16.4 11.8 Q10.5 15.8 4.6 11.8 Z" fill="#c65c2c"/></svg>
<svg style="left:1637.8px;top:955.4px" width="19.6" height="20.6" viewBox="0 0 19 20"><path d="M9.5 1.2 C5.4 1.2 4 4.6 4 8.2 C4 12 2.4 13.4 0.8 15 H18.2 C16.600 13.400 15 12 15 8.200 C15 4.600 13.600 1.200 9.500 1.200 Z M7 16.6 A2.500 2.500 0 0 0 12 16.600 Z" fill="#ffffff"/></svg>
<span style="position:absolute;left:1662.60px;top:954.70px;line-height:23px;font-family:'Liberation Sans', sans-serif;font-size:17.6px;color:#ffffff;white-space:pre;">7</span>
</div>
</body></html>
